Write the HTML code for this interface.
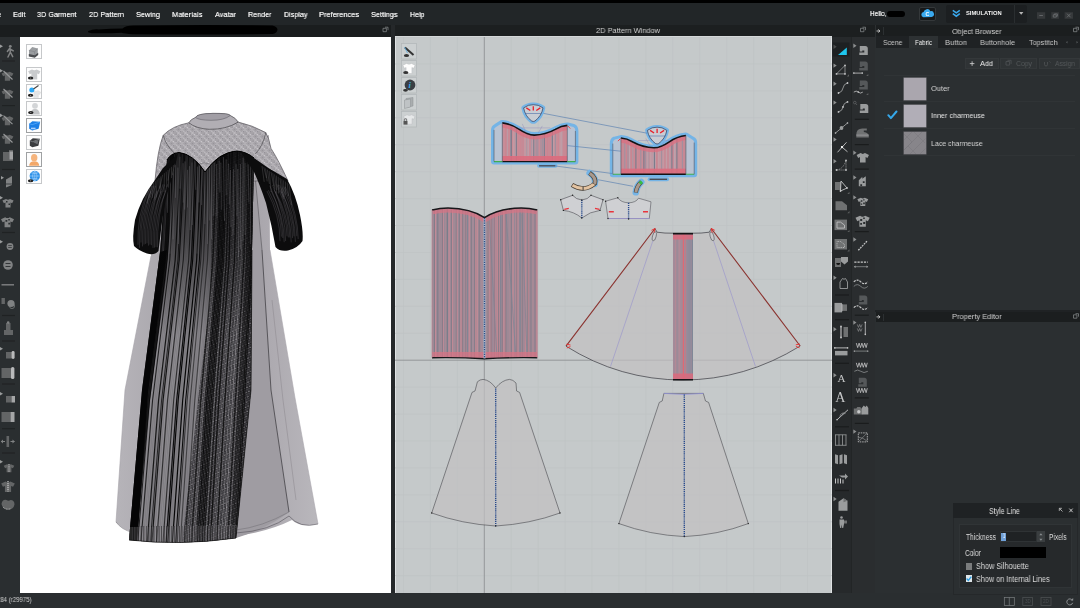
<!DOCTYPE html>
<html><head><meta charset="utf-8"><title>CLO</title>
<style>
*{box-sizing:border-box;margin:0;padding:0}
html,body{width:1080px;height:608px;overflow:hidden;background:#2a2e30}
body{position:relative;font-family:"Liberation Sans","DejaVu Sans",sans-serif;font-size:8px;color:#e8e8e8}
.abs{position:absolute}
.lb{will-change:transform;position:absolute;white-space:nowrap;transform-origin:0 50%;line-height:1.2;display:block}
#topblack{left:0;top:0;width:1080px;height:3px;background:#000}
#menubar{left:0;top:3px;width:1080px;height:22px;background:#222628}
#title3d{left:0;top:25px;width:391px;height:12px;background:#1a1d1e}
#title2d{left:394.5px;top:25px;width:481.5px;height:12px;background:#1c1f20}
#ltool{left:0;top:37px;width:20px;height:556px;background:#2a2e30}
#view3d{left:20px;top:37px;width:370.8px;height:555.5px;background:#fff;overflow:hidden}
#split{left:390.8px;top:25px;width:3.8px;height:568px;background:#25282a}
#view2d{left:394.5px;top:36px;width:437px;height:557.5px;border-right:1px solid #dfe2e3;background:#c5c9ca;overflow:hidden;border-left:1px solid #dfe2e3;border-bottom:1px solid #dfe2e3;border-top:1px solid #d4d7d8}
#rtoolA{left:831.5px;top:37px;width:19.5px;height:556px;background:#26292b}
#rtoolB{left:851px;top:37px;width:24px;height:556px;background:#2a2d2f;border-left:1px solid #222526}
#rpanel{left:875px;top:25px;width:205px;height:568px;background:#2b2f31}
#status{left:0;top:593px;width:1080px;height:15px;background:#2a2e30}
svg{position:absolute;left:0;top:0;overflow:visible}
</style></head><body>

<div id="topblack" class="abs"></div>
<div id="menubar" class="abs"></div>
<span class="lb" id="lb0" style="left:-3.0px;top:9.8px;font-size:8px;color:#e9e9e9;font-weight:normal;transform:scaleX(0.943);text-shadow:0 0 .6px #fff">e</span>
<span class="lb" id="lb1" style="left:12.5px;top:9.8px;font-size:8px;color:#e9e9e9;font-weight:normal;transform:scaleX(0.906);text-shadow:0 0 .6px #fff">Edit</span>
<span class="lb" id="lb2" style="left:37.0px;top:9.8px;font-size:8px;color:#e9e9e9;font-weight:normal;transform:scaleX(0.906);text-shadow:0 0 .6px #fff">3D Garment</span>
<span class="lb" id="lb3" style="left:88.5px;top:9.8px;font-size:8px;color:#e9e9e9;font-weight:normal;transform:scaleX(0.915);text-shadow:0 0 .6px #fff">2D Pattern</span>
<span class="lb" id="lb4" style="left:136.0px;top:9.8px;font-size:8px;color:#e9e9e9;font-weight:normal;transform:scaleX(0.914);text-shadow:0 0 .6px #fff">Sewing</span>
<span class="lb" id="lb5" style="left:172.0px;top:9.8px;font-size:8px;color:#e9e9e9;font-weight:normal;transform:scaleX(0.940);text-shadow:0 0 .6px #fff">Materials</span>
<span class="lb" id="lb6" style="left:214.5px;top:9.8px;font-size:8px;color:#e9e9e9;font-weight:normal;transform:scaleX(0.914);text-shadow:0 0 .6px #fff">Avatar</span>
<span class="lb" id="lb7" style="left:248.0px;top:9.8px;font-size:8px;color:#e9e9e9;font-weight:normal;transform:scaleX(0.895);text-shadow:0 0 .6px #fff">Render</span>
<span class="lb" id="lb8" style="left:283.5px;top:9.8px;font-size:8px;color:#e9e9e9;font-weight:normal;transform:scaleX(0.896);text-shadow:0 0 .6px #fff">Display</span>
<span class="lb" id="lb9" style="left:319.0px;top:9.8px;font-size:8px;color:#e9e9e9;font-weight:normal;transform:scaleX(0.927);text-shadow:0 0 .6px #fff">Preferences</span>
<span class="lb" id="lb10" style="left:371.0px;top:9.8px;font-size:8px;color:#e9e9e9;font-weight:normal;transform:scaleX(0.917);text-shadow:0 0 .6px #fff">Settings</span>
<span class="lb" id="lb11" style="left:409.5px;top:9.8px;font-size:8px;color:#e9e9e9;font-weight:normal;transform:scaleX(0.881);text-shadow:0 0 .6px #fff">Help</span>
<span class="lb" id="lb12" style="left:870.0px;top:9.4px;font-size:8px;color:#e9e9e9;font-weight:normal;transform:scaleX(0.807);text-shadow:0 0 .6px #fff">Hello,</span>
<div class="abs" style="left:887px;top:10.5px;width:18px;height:6.5px;background:#000;border-radius:3px"></div>
<div class="abs" style="left:918.5px;top:6.5px;width:17.5px;height:14px;background:#17191a;border:1px solid #34383a;border-radius:2px"></div>
<svg width="1080" height="608" viewBox="0 0 1080 608" style="pointer-events:none">
<path d="M923.3 17.2 a2.6 2.6 0 0 1 .3 -5.1 a3.6 3.6 0 0 1 6.8 -.9 a3 3 0 0 1 1.2 5.9 z" fill="#3aa9ee"/>
<text x="925.4" y="16.3" font-size="5.2" font-weight="bold" fill="#fff" font-family="Liberation Sans, sans-serif">C</text>
</svg>
<div class="abs" style="left:945.5px;top:4.5px;width:81.5px;height:18.5px;background:#1c1f21;border-radius:2px"></div>
<div class="abs" style="left:1013.5px;top:5px;width:1px;height:17.5px;background:#2a2e30"></div>
<svg width="1080" height="608" viewBox="0 0 1080 608"><path d="M952.8 10.3 l3.5 2.6 l3.5 -2.6 M952.8 13.6 l3.5 2.6 l3.5 -2.6" stroke="#3aa9ee" stroke-width="1.5" fill="none"/><path d="M1019 12 h4.4 l-2.2 2.8z" fill="#b5b5b5"/><rect x="1037" y="12.2" width="8.2" height="6.6" fill="#36393b"/><rect x="1051.3" y="12.2" width="7.6" height="6.6" fill="#36393b"/><rect x="1064.6" y="12.2" width="8.4" height="6.6" fill="#36393b"/><path d="M1039.3 15.5h3.6 M1053.3 14.8h3v2.3h-3z M1054.4 14.8v-.9h3v2.3h-1 M1067 13.7l3.6 3.6 M1070.6 13.7l-3.6 3.6" stroke="#6d7173" stroke-width=".8" fill="none"/></svg>
<span class="lb" id="lb13" style="left:966.0px;top:10.3px;font-size:5.8px;color:#f2f2f2;font-weight:bold;transform:scaleX(0.999);">SIMULATION</span>
<div id="title3d" class="abs"></div>
<div id="title2d" class="abs"></div>
<div id="split" class="abs"></div>
<span class="lb" id="lb14" style="left:595.8px;top:26.1px;font-size:7.8px;color:#d0d0d0;font-weight:normal;transform:scaleX(0.953);">2D Pattern Window</span>
<svg width="1080" height="608" viewBox="0 0 1080 608"><path d="M88.5 31 q4 -2 10 -1.6 q12 -.6 24 -.8 q3 -3.4 12 -3.2 q70 -.6 138 0 q5 1.2 5 4.4 q-.4 3.6 -5 4.2 q-70 1 -140 .2 q-8 -.4 -11 -1.4 q-14 .8 -30 .4 q-5 -.6 -3 -2.2z" fill="#000"/><path d="M383 28.3h3.4v3.4h-3.4z M385 27.2h3v3 M860.5 28.3h3.4v3.4h-3.4z M862.5 27.2h3v3" stroke="#8b8f91" stroke-width=".7" fill="none"/></svg>
<div id="ltool" class="abs"></div>
<svg width="1080" height="608" viewBox="0 0 1080 608">
<path d="M2 61H15" stroke="#1f2223" stroke-width="1.1"/>
<path d="M2 105.6H15" stroke="#1f2223" stroke-width="1.1"/>
<path d="M2 169.5H15" stroke="#1f2223" stroke-width="1.1"/>
<path d="M2 232.5H15" stroke="#1f2223" stroke-width="1.1"/>
<path d="M2 315.5H15" stroke="#1f2223" stroke-width="1.1"/>
<path d="M2 341H15" stroke="#1f2223" stroke-width="1.1"/>
<path d="M2 384H15" stroke="#1f2223" stroke-width="1.1"/>
<path d="M2 428.7H15" stroke="#1f2223" stroke-width="1.1"/>
<path d="M2 453H15" stroke="#1f2223" stroke-width="1.1"/>
<path d="M0 44.5l3 1.8l-3 1.8z" fill="#9a9c9d"/>
<circle cx="10.3" cy="46.3" r="1.4" fill="#808283"/><path d="M10 48 l-2.6 3.5 M10 48 l.3 4 l-2.3 5 M10.3 52 l2.4 4.6 M10 49 l3.3 1.8" stroke="#808283" stroke-width="1.5" fill="none" stroke-linecap="round"/>
<path d="M0 69l3 1.8l-3 1.8z" fill="#9a9c9d"/>
<path transform="translate(7.5 76) scale(0.95)" d="M-2.2 -4.5 q2.2 1.6 4.4 0 l4 1.8 l-1.6 3 l-1.8 -.8 v5.5 h-5.6 v-5.5 l-1.8 .8 l-1.6 -3z" fill="#636566"/>
<path d="M3.5 71 l9 8.5" stroke="#97999a" stroke-width="1.1"/>
<path transform="translate(7.5 94) scale(0.95)" d="M-2.2 -4.5 q2.2 1.6 4.4 0 l4 1.8 l-1.6 3 l-1.8 -.8 v5.5 h-5.6 v-5.5 l-1.8 .8 l-1.6 -3z" fill="#636566"/>
<path d="M3.5 89 l9 8.5" stroke="#97999a" stroke-width="1.1"/>
<path d="M0 113.6l3 1.8l-3 1.8z" fill="#9a9c9d"/>
<path transform="translate(7.5 120.6) scale(0.95)" d="M-2.2 -4.5 q2.2 1.6 4.4 0 l4 1.8 l-1.6 3 l-1.8 -.8 v5.5 h-5.6 v-5.5 l-1.8 .8 l-1.6 -3z" fill="#636566"/>
<path d="M3.5 115.6 l9 8.5" stroke="#97999a" stroke-width="1.1"/>
<path transform="translate(7.5 139) scale(0.95)" d="M-2.2 -4.5 q2.2 1.6 4.4 0 l4 1.8 l-1.6 3 l-1.8 -.8 v5.5 h-5.6 v-5.5 l-1.8 .8 l-1.6 -3z" fill="#636566"/>
<path d="M3.5 134 l9 8.5" stroke="#97999a" stroke-width="1.1"/>
<path d="M3 152 h6 v-2 h4 v11 h-10z" fill="#636566"/><path d="M9.5 151.5 h3.5 v8 h-3.5z" fill="#a2a3a4"/>
<path d="M1 176l3 1.8l-3 1.8z" fill="#9a9c9d"/>
<path d="M6 179.5 l6 -3.5 v9 l-6 2.5z" fill="#808283"/><path d="M6 184 h6" stroke="#2a2e30" stroke-width=".8"/>
<path d="M0 196l3 1.8l-3 1.8z" fill="#9a9c9d"/>
<path transform="translate(8 203) scale(0.9)" d="M-2.2 -4.5 q2.2 1.6 4.4 0 l4 1.8 l-1.6 3 l-1.8 -.8 v5.5 h-5.6 v-5.5 l-1.8 .8 l-1.6 -3z" fill="#808283"/>
<path transform="translate(7.5 222) scale(1.05)" d="M-2.2 -4.5 q2.2 1.6 4.4 0 l4 1.8 l-1.6 3 l-1.8 -.8 v5.5 h-5.6 v-5.5 l-1.8 .8 l-1.6 -3z" fill="#808283"/>
<path d="M6 201h1.5v1.5H6z M8.5 203.5h1.5v1.5H8.5z M5.5 220h1.8v1.8H5.5z M8.3 222.8h1.8v1.8H8.3z M8.3 219h1.5v1.5H8.3z" fill="#2a2e30"/>
<path d="M0 240l3 1.8l-3 1.8z" fill="#9a9c9d"/>
<circle cx="10" cy="246.5" r="3.4" fill="#808283"/><path d="M8.2 245.5h3.6 M8.2 247.5h3.6" stroke="#2a2e30" stroke-width=".7"/>
<circle cx="8" cy="265" r="4.8" fill="#808283"/><path d="M5.5 263.5h5 M5.5 266.5h5" stroke="#2a2e30" stroke-width=".9"/>
<path d="M1.5 284.8h12.5" stroke="#808283" stroke-width="1.4"/>
<rect x="1.5" y="298" width="3.4" height="6" fill="#636566"/><circle cx="11" cy="303.5" r="3.6" fill="#808283"/><circle cx="12" cy="306" r="2.6" fill="none" stroke="#808283" stroke-width=".7"/>
<path d="M6 323 h4.5 v8 h-4.5z" fill="#636566"/><circle cx="8.2" cy="322.6" r="1.3" fill="#808283"/>
<rect x="4" y="330" width="9" height="5" fill="#636566"/>
<path d="M0 347l3 1.8l-3 1.8z" fill="#9a9c9d"/>
<rect x="6" y="352" width="6" height="6.5" fill="#636566"/><rect x="11.6" y="351" width="3" height="8" rx="1.4" fill="#b9babb"/>
<rect x="1.5" y="368" width="10" height="10" fill="#636566"/><rect x="11" y="367" width="3.4" height="12" rx="1.6" fill="#b9babb"/>
<path d="M0 392l3 1.8l-3 1.8z" fill="#9a9c9d"/>
<rect x="6" y="396" width="5.5" height="6.5" fill="#636566"/><rect x="11.5" y="396" width="3.5" height="6.5" fill="#a5a6a7"/>
<rect x="1.5" y="412" width="9" height="10" fill="#636566"/><rect x="10.5" y="412" width="4" height="10" fill="#a5a6a7"/>
<rect x="6.5" y="436" width="2.6" height="11" fill="#636566"/><path d="M1 441.5h4 M10.5 441.5h4" stroke="#808283" stroke-width="1.2"/><path d="M3 439.5l-2.2 2l2.2 2z M12.5 439.5l2.2 2l-2.2 2z" fill="#808283"/>
<path d="M0 460l3 1.8l-3 1.8z" fill="#9a9c9d"/>
<path transform="translate(9 468) scale(0.85)" d="M-2.2 -4.5 q2.2 1.6 4.4 0 l4 1.8 l-1.6 3 l-1.8 -.8 v5.5 h-5.6 v-5.5 l-1.8 .8 l-1.6 -3z" fill="#636566"/>
<path d="M9 464v8" stroke="#c0c1c2" stroke-width="1.1" stroke-dasharray="1 .8"/>
<path transform="translate(8 486.5) scale(1.1)" d="M-2.2 -4.5 q2.2 1.6 4.4 0 l4 1.8 l-1.6 3 l-1.8 -.8 v5.5 h-5.6 v-5.5 l-1.8 .8 l-1.6 -3z" fill="#636566"/>
<path d="M8 481v10.5" stroke="#c0c1c2" stroke-width="1.3" stroke-dasharray="1.2 .8"/>
<path d="M1.5 504 q1 -5 5 -4 q2 1.3 4 0 q4 0 4 4.5 q-1 5 -6 5 q-6 0 -7 -5.5z" fill="#636566"/><path d="M3 507 q3.5 3.5 8 1.5" stroke="#b4b5b6" stroke-width="1" fill="none" stroke-dasharray="1 .7"/>
</svg>
<div id="view3d" class="abs"></div>
<svg width="1080" height="608" viewBox="0 0 1080 608">
<defs>
<pattern id="lace" width="7" height="7" patternUnits="userSpaceOnUse"><rect width="7" height="7" fill="#a7a4a9"/><path d="M0 3.5L3.5 0L7 3.5L3.5 7Z" fill="none" stroke="#c6c4c9" stroke-width=".8"/><circle cx="1.2" cy="1.2" r=".6" fill="#8c8990"/><circle cx="5.6" cy="1.4" r=".5" fill="#d2d0d5"/><circle cx="5.4" cy="5.6" r=".6" fill="#8f8c93"/><circle cx="1.6" cy="5.6" r=".5" fill="#bdbbc0"/><circle cx="3.5" cy="3.5" r=".7" fill="#98959b"/></pattern>
<pattern id="hatch" width="3.2" height="4.4" patternUnits="userSpaceOnUse" patternTransform="rotate(-24)"><rect width="3.2" height="4.4" fill="#262528"/><path d="M0 1.1H3.2" stroke="#949297" stroke-width=".8" stroke-dasharray="2 1.2"/><path d="M0 3.3H3.2" stroke="#5a585d" stroke-width=".6"/></pattern>
<linearGradient id="topdark" x1="0" y1="0" x2="0" y2="1"><stop offset="0" stop-color="#060607" stop-opacity=".85"/><stop offset=".5" stop-color="#060607" stop-opacity=".5"/><stop offset="1" stop-color="#060607" stop-opacity="0"/></linearGradient>
<linearGradient id="sheerL" x1="0" y1="0" x2="1" y2="0"><stop offset="0" stop-color="#b6b4b9"/><stop offset=".5" stop-color="#a7a4aa"/><stop offset="1" stop-color="#9f9ca2"/></linearGradient>
<linearGradient id="sheerR" x1="0" y1="0" x2="1" y2="0"><stop offset="0" stop-color="#a29fa5"/><stop offset=".4" stop-color="#adaab0"/><stop offset="1" stop-color="#b9b7bc"/></linearGradient>
<clipPath id="innerclip"><path d="M167 160 Q171 153 179 152.5 Q193 154 205 172 Q219 152 237 151 Q247 152 254 158 L252 250 L251 390 L236 538 Q180 546 129 540 L142 390 L160 252 Z"/></clipPath>
<clipPath id="slclip"><path d="M178 153.5 L163 168 L155 180 Q141 198 135 220 Q132 238 134 246 Q139 251 147 253.5 Q154 256 158.5 251 Q160 238 162 222 Q165 198 172 178 Z"/><path d="M240 151 L254 158 L268.4 168 L287 179 Q296 195 300 215 Q303.5 232 302.5 241 Q298 248 288 250.5 Q280 252 275.5 247 Q272 226 266 203 Q260 185 254 172 Z"/></clipPath>
</defs>
<path d="M163 135 L151 256 L125 390 L116 522 Q122 529 130 531 L240 534 L238 250 Z" fill="url(#sheerL)"/>
<path d="M238 150 L269 135 L270 250 L295 398 L318 524 Q300 528 292 520 Q270 531 238 536 Z" fill="url(#sheerR)"/>
<path d="M252 160 L262 250 L271 390 L289 512 Q270 527 236 538 L251 390 Z" fill="#9f9ca2"/>
<path d="M262 250 L271 390 L289 512" stroke="#37353a" stroke-width=".7" fill="none"/>
<path d="M254 165 L262 250" stroke="#545257" stroke-width=".6" fill="none"/>
<path d="M272 300 L283 400 L296 500" stroke="#8a878d" stroke-width=".5" fill="none"/>
<path d="M116 522 Q122 530 132 532" stroke="#6d6a70" stroke-width=".6" fill="none"/>
<path d="M236 533 Q270 531 289 516 Q300 529 318 524" stroke="#55535a" stroke-width=".6" fill="none"/>
<path d="M236 530 Q262 527 289 512" stroke="#6f6d73" stroke-width=".5" fill="none"/>
<path d="M116 522 L125 390 L151 256" stroke="#a4a1a7" stroke-width=".6" fill="none"/>
<path d="M318 524 L295 398 L270 250" stroke="#a9a6ac" stroke-width=".6" fill="none"/>
<path d="M188.8 122.8 Q172 126 163.2 135.3 Q157.5 150 155 181 L288 181 Q279 161 271 148.4 Q269 138 265.8 132.6 Q252 125 238.2 122.1 Q214 132 188.8 122.8 Z" fill="url(#lace)" stroke="#5a585d" stroke-width=".7"/>
<path d="M163.2 135.3 Q166 146 175.5 154 M265.8 132.6 Q263 146 255.3 154" stroke="#4f4d52" stroke-width=".7" fill="none"/>
<path d="M196 166 Q204 160 214 166" stroke="#6a686d" stroke-width=".5" fill="none"/>
<path d="M195.4 117.5 Q197 113.6 213 113.4 Q229 113.2 230.3 115.5 Q236 118 238.2 122.1 Q226 129.6 209.2 129.3 Q196 128.6 188.8 122.8 Q191 119 195.4 117.5Z" fill="#b1aeb4" stroke="#4b494d" stroke-width=".7"/>
<path d="M195.4 117.5 Q197 113.6 213 113.4 Q229 113.2 230.3 115.5 Q224 120.4 211 120.3 Q199 120.2 195.4 117.5Z" fill="#a19ea5" stroke="#55535a" stroke-width=".5"/>
<g clip-path="url(#innerclip)">
<rect x="120" y="145" width="150" height="400" fill="#232225"/>
<path d="M214 150 L256 150 L254 240 L252 390 L236 545 L178 545 L196 400 L208 300 Z" fill="url(#hatch)"/>
<path d="M176 150 L214 150 L210 300 L198 400 L182 545 L136 545 L150 400 L166 280 Z" fill="#7b797e"/>
<path d="M166.0 150 L159.0 260 L140.5 400 L128.0 545" stroke="#111" stroke-width="0.8" fill="none" opacity="0.95"/>
<path d="M167.3 150 L160.3 260 L142.0 400 L129.6 545" stroke="#111" stroke-width="1.2" fill="none" opacity="0.95"/>
<path d="M168.6 150 L161.7 260 L143.5 400 L131.2 545" stroke="#8d8b90" stroke-width="0.8" fill="none" opacity="0.4"/>
<path d="M169.8 150 L163.0 260 L145.0 400 L132.7 545" stroke="#9a989d" stroke-width="0.6" fill="none" opacity="0.7"/>
<path d="M171.1 150 L164.4 260 L146.5 400 L134.3 545" stroke="#111" stroke-width="1.2" fill="none" opacity="0.95"/>
<path d="M172.4 150 L165.7 260 L148.0 400 L135.9 545" stroke="#111" stroke-width="1.2" fill="none" opacity="0.95"/>
<path d="M173.7 150 L167.1 260 L149.5 400 L137.5 545" stroke="#000" stroke-width="0.8" fill="none" opacity="0.95"/>
<path d="M174.9 150 L168.4 260 L151.1 400 L139.1 545" stroke="#b1afb4" stroke-width="0.6" fill="none" opacity="0.7"/>
<path d="M176.2 150 L169.8 260 L152.6 400 L140.6 545" stroke="#000" stroke-width="0.8" fill="none" opacity="0.95"/>
<path d="M177.5 150 L171.1 260 L154.1 400 L142.2 545" stroke="#b1afb4" stroke-width="0.5" fill="none" opacity="0.55"/>
<path d="M178.8 150 L172.5 260 L155.6 400 L143.8 545" stroke="#9a989d" stroke-width="0.6" fill="none" opacity="0.7"/>
<path d="M180.0 150 L173.8 260 L157.1 400 L145.4 545" stroke="#9a989d" stroke-width="0.8" fill="none" opacity="0.55"/>
<path d="M181.3 150 L175.2 260 L158.6 400 L147.0 545" stroke="#111" stroke-width="1.2" fill="none" opacity="0.95"/>
<path d="M182.6 150 L176.5 260 L160.1 400 L148.5 545" stroke="#8d8b90" stroke-width="0.6" fill="none" opacity="0.4"/>
<path d="M183.9 150 L177.9 260 L161.6 400 L150.1 545" stroke="#0a0a0b" stroke-width="0.8" fill="none" opacity="0.95"/>
<path d="M185.1 150 L179.2 260 L163.1 400 L151.7 545" stroke="#111" stroke-width="1.2" fill="none" opacity="0.95"/>
<path d="M186.4 150 L180.6 260 L164.6 400 L153.3 545" stroke="#9a989d" stroke-width="0.6" fill="none" opacity="0.7"/>
<path d="M187.7 150 L181.9 260 L166.1 400 L154.9 545" stroke="#b1afb4" stroke-width="0.6" fill="none" opacity="0.7"/>
<path d="M189.0 150 L183.3 260 L167.6 400 L156.4 545" stroke="#111" stroke-width="0.8" fill="none" opacity="0.95"/>
<path d="M190.2 150 L184.6 260 L169.1 400 L158.0 545" stroke="#b1afb4" stroke-width="0.5" fill="none" opacity="0.55"/>
<path d="M191.5 150 L186.0 260 L170.6 400 L159.6 545" stroke="#b1afb4" stroke-width="0.8" fill="none" opacity="0.4"/>
<path d="M192.8 150 L187.3 260 L172.2 400 L161.2 545" stroke="#9a989d" stroke-width="0.8" fill="none" opacity="0.7"/>
<path d="M194.1 150 L188.7 260 L173.7 400 L162.8 545" stroke="#111" stroke-width="0.8" fill="none" opacity="0.95"/>
<path d="M195.3 150 L190.0 260 L175.2 400 L164.3 545" stroke="#b1afb4" stroke-width="0.6" fill="none" opacity="0.55"/>
<path d="M196.6 150 L191.3 260 L176.7 400 L165.9 545" stroke="#0a0a0b" stroke-width="1.2" fill="none" opacity="0.95"/>
<path d="M197.9 150 L192.7 260 L178.2 400 L167.5 545" stroke="#000" stroke-width="1.2" fill="none" opacity="0.95"/>
<path d="M199.2 150 L194.0 260 L179.7 400 L169.1 545" stroke="#8d8b90" stroke-width="0.6" fill="none" opacity="0.55"/>
<path d="M200.4 150 L195.4 260 L181.2 400 L170.7 545" stroke="#8d8b90" stroke-width="0.5" fill="none" opacity="0.7"/>
<path d="M201.7 150 L196.7 260 L182.7 400 L172.2 545" stroke="#000" stroke-width="1.2" fill="none" opacity="0.95"/>
<path d="M203.0 150 L198.1 260 L184.2 400 L173.8 545" stroke="#9a989d" stroke-width="0.8" fill="none" opacity="0.55"/>
<path d="M204.3 150 L199.4 260 L185.7 400 L175.4 545" stroke="#000" stroke-width="1.0" fill="none" opacity="0.95"/>
<path d="M205.5 150 L200.8 260 L187.2 400 L177.0 545" stroke="#000" stroke-width="0.6" fill="none" opacity="0.95"/>
<path d="M206.8 150 L202.1 260 L188.7 400 L178.6 545" stroke="#9a989d" stroke-width="0.6" fill="none" opacity="0.7"/>
<path d="M208.1 150 L203.5 260 L190.2 400 L180.1 545" stroke="#111" stroke-width="0.6" fill="none" opacity="0.95"/>
<path d="M209.4 150 L204.8 260 L191.7 400 L181.7 545" stroke="#9a989d" stroke-width="0.6" fill="none" opacity="0.55"/>
<path d="M210.6 150 L206.2 260 L193.3 400 L183.3 545" stroke="#9a989d" stroke-width="0.6" fill="none" opacity="0.55"/>
<path d="M211.9 150 L207.5 260 L194.8 400 L184.9 545" stroke="#111" stroke-width="0.6" fill="none" opacity="0.95"/>
<path d="M213.2 150 L208.9 260 L196.3 400 L186.4 545" stroke="#b1afb4" stroke-width="0.6" fill="none" opacity="0.55"/>
<path d="M214.5 150 L210.2 260 L197.8 400 L188.0 545" stroke="#9a989d" stroke-width="0.6" fill="none" opacity="0.55"/>
<path d="M215.7 150 L211.6 260 L199.3 400 L189.6 545" stroke="#8d8b90" stroke-width="0.6" fill="none" opacity="0.7"/>
<path d="M217.0 150 L212.9 260 L200.8 400 L191.2 545" stroke="#111" stroke-width="0.8" fill="none" opacity="0.95"/>
<path d="M218.3 150 L214.3 260 L202.3 400 L192.8 545" stroke="#9a989d" stroke-width="0.6" fill="none" opacity="0.7"/>
<path d="M219.6 150 L215.6 260 L203.8 400 L194.3 545" stroke="#9a989d" stroke-width="0.8" fill="none" opacity="0.55"/>
<path d="M220.8 150 L217.0 260 L205.3 400 L195.9 545" stroke="#111" stroke-width="0.6" fill="none" opacity="0.95"/>
<path d="M222.1 150 L218.3 260 L206.8 400 L197.5 545" stroke="#0a0a0b" stroke-width="1.0" fill="none" opacity="0.95"/>
<path d="M223.4 150 L219.7 260 L208.3 400 L199.1 545" stroke="#0a0a0b" stroke-width="0.8" fill="none" opacity="0.95"/>
<path d="M224.7 150 L221.0 260 L209.8 400 L200.7 545" stroke="#111" stroke-width="1.0" fill="none" opacity="0.95"/>
<path d="M225.9 150 L222.3 260 L211.3 400 L202.2 545" stroke="#000" stroke-width="0.8" fill="none" opacity="0.95"/>
<path d="M227.2 150 L223.7 260 L212.8 400 L203.8 545" stroke="#0a0a0b" stroke-width="0.8" fill="none" opacity="0.95"/>
<path d="M228.5 150 L225.0 260 L214.4 400 L205.4 545" stroke="#b1afb4" stroke-width="0.8" fill="none" opacity="0.4"/>
<path d="M229.8 150 L226.4 260 L215.9 400 L207.0 545" stroke="#0a0a0b" stroke-width="0.8" fill="none" opacity="0.95"/>
<path d="M231.0 150 L227.7 260 L217.4 400 L208.6 545" stroke="#8d8b90" stroke-width="0.5" fill="none" opacity="0.55"/>
<path d="M232.3 150 L229.1 260 L218.9 400 L210.1 545" stroke="#111" stroke-width="1.2" fill="none" opacity="0.95"/>
<path d="M233.6 150 L230.4 260 L220.4 400 L211.7 545" stroke="#8d8b90" stroke-width="0.8" fill="none" opacity="0.4"/>
<path d="M234.9 150 L231.8 260 L221.9 400 L213.3 545" stroke="#b1afb4" stroke-width="0.5" fill="none" opacity="0.55"/>
<path d="M236.1 150 L233.1 260 L223.4 400 L214.9 545" stroke="#8d8b90" stroke-width="0.8" fill="none" opacity="0.55"/>
<path d="M237.4 150 L234.5 260 L224.9 400 L216.5 545" stroke="#111" stroke-width="1.0" fill="none" opacity="0.95"/>
<path d="M238.7 150 L235.8 260 L226.4 400 L218.0 545" stroke="#9a989d" stroke-width="0.6" fill="none" opacity="0.7"/>
<path d="M240.0 150 L237.2 260 L227.9 400 L219.6 545" stroke="#8d8b90" stroke-width="0.5" fill="none" opacity="0.4"/>
<path d="M241.2 150 L238.5 260 L229.4 400 L221.2 545" stroke="#b1afb4" stroke-width="0.8" fill="none" opacity="0.55"/>
<path d="M242.5 150 L239.9 260 L230.9 400 L222.8 545" stroke="#b1afb4" stroke-width="0.5" fill="none" opacity="0.4"/>
<path d="M243.8 150 L241.2 260 L232.4 400 L224.4 545" stroke="#b1afb4" stroke-width="0.8" fill="none" opacity="0.7"/>
<path d="M245.1 150 L242.6 260 L233.9 400 L225.9 545" stroke="#8d8b90" stroke-width="0.5" fill="none" opacity="0.7"/>
<path d="M246.3 150 L243.9 260 L235.5 400 L227.5 545" stroke="#000" stroke-width="0.6" fill="none" opacity="0.95"/>
<path d="M247.6 150 L245.3 260 L237.0 400 L229.1 545" stroke="#b1afb4" stroke-width="0.5" fill="none" opacity="0.55"/>
<path d="M248.9 150 L246.6 260 L238.5 400 L230.7 545" stroke="#111" stroke-width="0.6" fill="none" opacity="0.95"/>
<path d="M250.2 150 L248.0 260 L240.0 400 L232.3 545" stroke="#111" stroke-width="0.6" fill="none" opacity="0.95"/>
<path d="M251.4 150 L249.3 260 L241.5 400 L233.8 545" stroke="#111" stroke-width="0.6" fill="none" opacity="0.95"/>
<path d="M252.7 150 L250.7 260 L243.0 400 L235.4 545" stroke="#111" stroke-width="1.2" fill="none" opacity="0.95"/>
<path d="M254.0 150 L252.0 260 L244.5 400 L237.0 545" stroke="#000" stroke-width="0.8" fill="none" opacity="0.95"/>
<path d="M160 252 L167 250 L148 392 L137 545 L128 545 L142 390 Z" fill="#050506"/>
<rect x="120" y="145" width="150" height="190" fill="url(#topdark)"/>
<path d="M168.1 168.4 l-0.8 44.4" stroke="#a3a1a6" stroke-width=".5" opacity=".5"/>
<path d="M170.7 168.5 l-0.7 85.2" stroke="#a3a1a6" stroke-width=".5" opacity=".5"/>
<path d="M173.3 164.0 l-0.2 75.4" stroke="#a3a1a6" stroke-width=".5" opacity=".5"/>
<path d="M175.4 164.7 l0.0 33.1" stroke="#a3a1a6" stroke-width=".5" opacity=".5"/>
<path d="M177.9 167.5 l0.7 76.5" stroke="#a3a1a6" stroke-width=".5" opacity=".5"/>
<path d="M180.0 156.7 l-0.0 32.0" stroke="#a3a1a6" stroke-width=".5" opacity=".5"/>
<path d="M183.1 163.2 l-0.0 39.4" stroke="#a3a1a6" stroke-width=".5" opacity=".5"/>
<path d="M184.9 161.4 l-0.2 48.2" stroke="#a3a1a6" stroke-width=".5" opacity=".5"/>
<path d="M187.5 169.8 l-0.1 37.7" stroke="#a3a1a6" stroke-width=".5" opacity=".5"/>
<path d="M189.6 166.1 l0.6 64.0" stroke="#a3a1a6" stroke-width=".5" opacity=".5"/>
<path d="M192.0 162.5 l0.3 62.5" stroke="#a3a1a6" stroke-width=".5" opacity=".5"/>
<path d="M195.0 156.6 l0.8 33.2" stroke="#a3a1a6" stroke-width=".5" opacity=".5"/>
<path d="M197.4 166.6 l-0.4 87.0" stroke="#a3a1a6" stroke-width=".5" opacity=".5"/>
<path d="M199.6 156.3 l-0.6 46.2" stroke="#a3a1a6" stroke-width=".5" opacity=".5"/>
<path d="M202.2 167.2 l-0.6 37.8" stroke="#a3a1a6" stroke-width=".5" opacity=".5"/>
<path d="M204.0 160.6 l0.9 63.5" stroke="#a3a1a6" stroke-width=".5" opacity=".5"/>
<path d="M207.3 157.7 l0.4 86.3" stroke="#a3a1a6" stroke-width=".5" opacity=".5"/>
<path d="M209.5 167.9 l0.1 52.6" stroke="#a3a1a6" stroke-width=".5" opacity=".5"/>
<path d="M211.3 160.5 l0.1 78.7" stroke="#a3a1a6" stroke-width=".5" opacity=".5"/>
<path d="M214.3 162.6 l-0.5 53.3" stroke="#a3a1a6" stroke-width=".5" opacity=".5"/>
<path d="M216.5 163.9 l0.3 52.5" stroke="#a3a1a6" stroke-width=".5" opacity=".5"/>
<path d="M219.2 160.8 l0.7 31.5" stroke="#a3a1a6" stroke-width=".5" opacity=".5"/>
<path d="M220.9 162.7 l0.4 47.1" stroke="#a3a1a6" stroke-width=".5" opacity=".5"/>
<path d="M223.5 157.2 l1.0 63.8" stroke="#a3a1a6" stroke-width=".5" opacity=".5"/>
<path d="M226.1 159.3 l0.1 36.0" stroke="#a3a1a6" stroke-width=".5" opacity=".5"/>
<path d="M228.6 163.7 l0.7 40.8" stroke="#a3a1a6" stroke-width=".5" opacity=".5"/>
<path d="M230.5 170.0 l0.3 57.2" stroke="#a3a1a6" stroke-width=".5" opacity=".5"/>
<path d="M233.5 169.2 l-0.5 66.0" stroke="#a3a1a6" stroke-width=".5" opacity=".5"/>
<path d="M236.1 163.8 l0.9 52.5" stroke="#a3a1a6" stroke-width=".5" opacity=".5"/>
<path d="M237.8 169.0 l0.7 88.0" stroke="#a3a1a6" stroke-width=".5" opacity=".5"/>
<path d="M240.4 164.0 l0.2 85.4" stroke="#a3a1a6" stroke-width=".5" opacity=".5"/>
<path d="M243.1 158.2 l-0.2 83.3" stroke="#a3a1a6" stroke-width=".5" opacity=".5"/>
<path d="M245.0 163.0 l-0.0 71.9" stroke="#a3a1a6" stroke-width=".5" opacity=".5"/>
<path d="M248.2 164.2 l0.7 38.2" stroke="#a3a1a6" stroke-width=".5" opacity=".5"/>
<path d="M250.4 158.1 l0.0 86.1" stroke="#a3a1a6" stroke-width=".5" opacity=".5"/>
<path d="M252.9 163.5 l0.6 70.3" stroke="#a3a1a6" stroke-width=".5" opacity=".5"/>
<path d="M128 527 L240 525 L238 545 L128 545 Z" fill="#8a888d" opacity=".35"/>
<path d="M131.0 526 v16" stroke="#000" stroke-width=".6" opacity=".8"/>
<path d="M133.6 526 v16" stroke="#000" stroke-width=".6" opacity=".8"/>
<path d="M136.1 526 v16" stroke="#000" stroke-width=".6" opacity=".8"/>
<path d="M138.7 526 v16" stroke="#000" stroke-width=".6" opacity=".8"/>
<path d="M141.2 526 v16" stroke="#000" stroke-width=".6" opacity=".8"/>
<path d="M143.8 526 v16" stroke="#000" stroke-width=".6" opacity=".8"/>
<path d="M146.3 526 v16" stroke="#000" stroke-width=".6" opacity=".8"/>
<path d="M148.8 526 v16" stroke="#000" stroke-width=".6" opacity=".8"/>
<path d="M151.4 526 v16" stroke="#000" stroke-width=".6" opacity=".8"/>
<path d="M153.9 526 v16" stroke="#000" stroke-width=".6" opacity=".8"/>
<path d="M156.5 526 v16" stroke="#000" stroke-width=".6" opacity=".8"/>
<path d="M159.1 526 v16" stroke="#000" stroke-width=".6" opacity=".8"/>
<path d="M161.6 526 v16" stroke="#000" stroke-width=".6" opacity=".8"/>
<path d="M164.2 526 v16" stroke="#000" stroke-width=".6" opacity=".8"/>
<path d="M166.7 526 v16" stroke="#000" stroke-width=".6" opacity=".8"/>
<path d="M169.2 526 v16" stroke="#000" stroke-width=".6" opacity=".8"/>
<path d="M171.8 526 v16" stroke="#000" stroke-width=".6" opacity=".8"/>
<path d="M174.3 526 v16" stroke="#000" stroke-width=".6" opacity=".8"/>
<path d="M176.9 526 v16" stroke="#000" stroke-width=".6" opacity=".8"/>
<path d="M179.4 526 v16" stroke="#000" stroke-width=".6" opacity=".8"/>
<path d="M182.0 526 v16" stroke="#000" stroke-width=".6" opacity=".8"/>
<path d="M184.6 526 v16" stroke="#000" stroke-width=".6" opacity=".8"/>
<path d="M187.1 526 v16" stroke="#000" stroke-width=".6" opacity=".8"/>
<path d="M189.7 526 v16" stroke="#000" stroke-width=".6" opacity=".8"/>
<path d="M192.2 526 v16" stroke="#000" stroke-width=".6" opacity=".8"/>
<path d="M194.8 526 v16" stroke="#000" stroke-width=".6" opacity=".8"/>
<path d="M197.3 526 v16" stroke="#000" stroke-width=".6" opacity=".8"/>
<path d="M199.8 526 v16" stroke="#000" stroke-width=".6" opacity=".8"/>
<path d="M202.4 526 v16" stroke="#000" stroke-width=".6" opacity=".8"/>
<path d="M204.9 526 v16" stroke="#000" stroke-width=".6" opacity=".8"/>
<path d="M207.5 526 v16" stroke="#000" stroke-width=".6" opacity=".8"/>
<path d="M210.1 526 v16" stroke="#000" stroke-width=".6" opacity=".8"/>
<path d="M212.6 526 v16" stroke="#000" stroke-width=".6" opacity=".8"/>
<path d="M215.1 526 v16" stroke="#000" stroke-width=".6" opacity=".8"/>
<path d="M217.7 526 v16" stroke="#000" stroke-width=".6" opacity=".8"/>
<path d="M220.2 526 v16" stroke="#000" stroke-width=".6" opacity=".8"/>
<path d="M222.8 526 v16" stroke="#000" stroke-width=".6" opacity=".8"/>
<path d="M225.3 526 v16" stroke="#000" stroke-width=".6" opacity=".8"/>
<path d="M227.9 526 v16" stroke="#000" stroke-width=".6" opacity=".8"/>
<path d="M230.4 526 v16" stroke="#000" stroke-width=".6" opacity=".8"/>
<path d="M233.0 526 v16" stroke="#000" stroke-width=".6" opacity=".8"/>
<path d="M235.6 526 v16" stroke="#000" stroke-width=".6" opacity=".8"/>
</g>
<path d="M167 160 Q171 153 179 152.5 Q193 154 205 172 Q219 152 237 151 Q247 152 254 158" stroke="#000" stroke-width="1" fill="none"/>
<path d="M129 540 Q180 546 236 538" stroke="#111" stroke-width=".7" fill="none"/>
<path d="M252 250 L251 390 L236 538" stroke="#111" stroke-width=".7" fill="none"/>
<path d="M178 153.5 L163 168 L155 180 Q141 198 135 220 Q132 238 134 246 Q139 251 147 253.5 Q154 256 158.5 251 Q160 238 162 222 Q165 198 172 178 Z" fill="#0c0c0d"/>
<path d="M240 151 L254 158 L268.4 168 L287 179 Q296 195 300 215 Q303.5 232 302.5 241 Q298 248 288 250.5 Q280 252 275.5 247 Q272 226 266 203 Q260 185 254 172 Z" fill="#0c0c0d"/>
<path d="M148.0 190.8 Q137.0 215 138.0 244.8" stroke="#7f7d82" stroke-width=".45" fill="none" opacity=".6"/>
<path d="M149.5 188.7 Q138.5 215 139.5 247.9" stroke="#7f7d82" stroke-width=".45" fill="none" opacity=".6"/>
<path d="M151.0 191.1 Q140.0 215 141.0 242.5" stroke="#7f7d82" stroke-width=".45" fill="none" opacity=".6"/>
<path d="M152.5 186.1 Q141.5 215 142.5 246.4" stroke="#7f7d82" stroke-width=".45" fill="none" opacity=".6"/>
<path d="M154.0 185.6 Q143.0 215 144.0 244.6" stroke="#7f7d82" stroke-width=".45" fill="none" opacity=".6"/>
<path d="M155.5 185.9 Q144.5 215 145.5 243.9" stroke="#7f7d82" stroke-width=".45" fill="none" opacity=".6"/>
<path d="M157.0 190.9 Q146.0 215 147.0 243.3" stroke="#7f7d82" stroke-width=".45" fill="none" opacity=".6"/>
<path d="M158.5 189.6 Q147.5 215 148.5 245.6" stroke="#7f7d82" stroke-width=".45" fill="none" opacity=".6"/>
<path d="M160.0 185.6 Q149.0 215 150.0 244.6" stroke="#7f7d82" stroke-width=".45" fill="none" opacity=".6"/>
<path d="M161.5 191.2 Q150.5 215 151.5 245.2" stroke="#7f7d82" stroke-width=".45" fill="none" opacity=".6"/>
<path d="M163.0 184.2 Q152.0 215 153.0 247.9" stroke="#7f7d82" stroke-width=".45" fill="none" opacity=".6"/>
<path d="M164.5 184.6 Q153.5 215 154.5 247.6" stroke="#7f7d82" stroke-width=".45" fill="none" opacity=".6"/>
<path d="M166.0 190.3 Q155.0 215 156.0 247.1" stroke="#7f7d82" stroke-width=".45" fill="none" opacity=".6"/>
<path d="M167.5 184.4 Q156.5 215 157.5 247.3" stroke="#7f7d82" stroke-width=".45" fill="none" opacity=".6"/>
<path d="M267.0 191.1 Q280.0 215 280.0 241.2" stroke="#7f7d82" stroke-width=".45" fill="none" opacity=".6"/>
<path d="M268.4 190.2 Q281.4 215 281.4 236.6" stroke="#7f7d82" stroke-width=".45" fill="none" opacity=".6"/>
<path d="M269.8 185.7 Q282.8 215 282.8 238.0" stroke="#7f7d82" stroke-width=".45" fill="none" opacity=".6"/>
<path d="M271.2 191.1 Q284.2 215 284.2 242.2" stroke="#7f7d82" stroke-width=".45" fill="none" opacity=".6"/>
<path d="M272.6 185.1 Q285.6 215 285.6 241.0" stroke="#7f7d82" stroke-width=".45" fill="none" opacity=".6"/>
<path d="M274.0 189.4 Q287.0 215 287.0 236.3" stroke="#7f7d82" stroke-width=".45" fill="none" opacity=".6"/>
<path d="M275.4 191.5 Q288.4 215 288.4 237.4" stroke="#7f7d82" stroke-width=".45" fill="none" opacity=".6"/>
<path d="M276.8 184.4 Q289.8 215 289.8 237.5" stroke="#7f7d82" stroke-width=".45" fill="none" opacity=".6"/>
<path d="M278.2 184.7 Q291.2 215 291.2 242.4" stroke="#7f7d82" stroke-width=".45" fill="none" opacity=".6"/>
<path d="M279.6 184.9 Q292.6 215 292.6 238.1" stroke="#7f7d82" stroke-width=".45" fill="none" opacity=".6"/>
<path d="M281.0 191.3 Q294.0 215 294.0 236.3" stroke="#7f7d82" stroke-width=".45" fill="none" opacity=".6"/>
<path d="M282.4 187.6 Q295.4 215 295.4 241.9" stroke="#7f7d82" stroke-width=".45" fill="none" opacity=".6"/>
<path d="M283.8 186.7 Q296.8 215 296.8 236.2" stroke="#7f7d82" stroke-width=".45" fill="none" opacity=".6"/>
<path d="M285.2 186.7 Q298.2 215 298.2 239.0" stroke="#7f7d82" stroke-width=".45" fill="none" opacity=".6"/>
<g clip-path="url(#slclip)">
<path d="M150.0 186.0 l-2.7 17.7" stroke="#8a888d" stroke-width=".5" opacity=".55"/>
<path d="M262.0 166.0 l2.2 15.9" stroke="#8a888d" stroke-width=".5" opacity=".55"/>
<path d="M151.8 184.4 l-2.5 13.8" stroke="#8a888d" stroke-width=".5" opacity=".55"/>
<path d="M263.8 167.2 l2.7 10.9" stroke="#8a888d" stroke-width=".5" opacity=".55"/>
<path d="M153.6 182.8 l-1.3 15.3" stroke="#8a888d" stroke-width=".5" opacity=".55"/>
<path d="M265.6 168.4 l1.6 13.0" stroke="#8a888d" stroke-width=".5" opacity=".55"/>
<path d="M155.4 181.2 l-0.9 18.4" stroke="#8a888d" stroke-width=".5" opacity=".55"/>
<path d="M267.4 169.6 l2.0 14.4" stroke="#8a888d" stroke-width=".5" opacity=".55"/>
<path d="M157.2 179.6 l-1.2 18.0" stroke="#8a888d" stroke-width=".5" opacity=".55"/>
<path d="M269.2 170.8 l2.0 21.3" stroke="#8a888d" stroke-width=".5" opacity=".55"/>
<path d="M159.0 178.0 l0.3 11.3" stroke="#8a888d" stroke-width=".5" opacity=".55"/>
<path d="M271.0 172.0 l2.8 14.1" stroke="#8a888d" stroke-width=".5" opacity=".55"/>
<path d="M160.8 176.4 l-0.7 16.3" stroke="#8a888d" stroke-width=".5" opacity=".55"/>
<path d="M272.8 173.2 l2.0 16.1" stroke="#8a888d" stroke-width=".5" opacity=".55"/>
<path d="M162.6 174.8 l-2.8 13.5" stroke="#8a888d" stroke-width=".5" opacity=".55"/>
<path d="M274.6 174.4 l2.2 18.9" stroke="#8a888d" stroke-width=".5" opacity=".55"/>
<path d="M164.4 173.2 l-0.4 18.8" stroke="#8a888d" stroke-width=".5" opacity=".55"/>
<path d="M276.4 175.6 l0.4 14.4" stroke="#8a888d" stroke-width=".5" opacity=".55"/>
<path d="M166.2 171.6 l0.7 15.5" stroke="#8a888d" stroke-width=".5" opacity=".55"/>
<path d="M278.2 176.8 l0.3 16.7" stroke="#8a888d" stroke-width=".5" opacity=".55"/>
<path d="M168.0 170.0 l0.7 17.7" stroke="#8a888d" stroke-width=".5" opacity=".55"/>
<path d="M280.0 178.0 l1.9 15.0" stroke="#8a888d" stroke-width=".5" opacity=".55"/>
<path d="M169.8 168.4 l-1.8 12.2" stroke="#8a888d" stroke-width=".5" opacity=".55"/>
<path d="M281.8 179.2 l1.4 19.4" stroke="#8a888d" stroke-width=".5" opacity=".55"/>
<path d="M171.6 166.8 l-0.2 11.3" stroke="#8a888d" stroke-width=".5" opacity=".55"/>
<path d="M283.6 180.4 l0.5 16.6" stroke="#8a888d" stroke-width=".5" opacity=".55"/>
<path d="M173.4 165.2 l-0.7 14.7" stroke="#8a888d" stroke-width=".5" opacity=".55"/>
<path d="M285.4 181.6 l0.3 13.3" stroke="#8a888d" stroke-width=".5" opacity=".55"/>
<path d="M175.2 163.6 l-2.8 11.6" stroke="#8a888d" stroke-width=".5" opacity=".55"/>
<path d="M287.2 182.8 l1.4 13.3" stroke="#8a888d" stroke-width=".5" opacity=".55"/>
<path d="M177.0 162.0 l-0.2 16.2" stroke="#8a888d" stroke-width=".5" opacity=".55"/>
<path d="M289.0 184.0 l2.6 21.3" stroke="#8a888d" stroke-width=".5" opacity=".55"/>
</g>
</svg>
<div class="abs" style="left:26.3px;top:43.50px;width:15.4px;height:15.3px;background:#fdfdfd;border:1px solid #c6c8ca"></div>
<div class="abs" style="left:26.3px;top:66.50px;width:15.4px;height:15.3px;background:#fdfdfd;border:1px solid #c6c8ca"></div>
<div class="abs" style="left:26.3px;top:83.55px;width:15.4px;height:15.3px;background:#fdfdfd;border:1px solid #c6c8ca"></div>
<div class="abs" style="left:26.3px;top:100.60px;width:15.4px;height:15.3px;background:#fdfdfd;border:1px solid #c6c8ca"></div>
<div class="abs" style="left:26.3px;top:117.65px;width:15.4px;height:15.3px;background:#fdfdfd;border:1px solid #9fa1a3"></div>
<div class="abs" style="left:26.3px;top:134.70px;width:15.4px;height:15.3px;background:#fdfdfd;border:1px solid #c6c8ca"></div>
<div class="abs" style="left:26.3px;top:151.75px;width:15.4px;height:15.3px;background:#fdfdfd;border:1px solid #9fa1a3"></div>
<div class="abs" style="left:26.3px;top:168.80px;width:15.4px;height:15.3px;background:#fdfdfd;border:1px solid #c6c8ca"></div>
<svg width="1080" height="608" viewBox="0 0 1080 608">
<path d="M29 50.5l3.2 -3.4l5.6 1.4v6l-3.2 2.6l-5.6 -1.2z" fill="#9a9da0"/><path d="M29 50.5l5.6 1.2l3.2 -3.2M34.6 51.7v5.4" stroke="#7a7d80" stroke-width=".5" fill="none"/><path d="M28.8 54.1l6 1.2l3.4 -2.6v2.4l-3.4 2.6l-6 -1.2z" fill="#4b4d50"/>
<path d="M32 69.5q2.3 1.6 4.6 0l3.8 1.8l-1.5 3l-1.7 -.8v6h-5.8v-6l-1.7 .8l-1.5 -3z" fill="#c9cbcd"/>
<ellipse cx="30.6" cy="78.0" rx="2.7" ry="1.5" fill="#1f1f1f"/><circle cx="30.6" cy="78.0" r=".6" fill="#999"/>
<path d="M34 90.55q2 1.4 4 0l2.8 1.6l-1.2 2.4l-1.2 -.6v3.6h-4.8z" fill="#e4e5e6" stroke="#cfd0d1" stroke-width=".3"/><circle cx="31.8" cy="90.05" r="2.5" fill="#2aa7f5"/><path d="M33.5 89.05l5 -3.6" stroke="#444" stroke-width="1.1"/>
<ellipse cx="30.6" cy="95.35" rx="2.7" ry="1.5" fill="#1f1f1f"/><circle cx="30.6" cy="95.35" r=".6" fill="#999"/>
<circle cx="35" cy="105.8" r="2.9" fill="#d3d5d7"/><path d="M30.5 114.6q0 -5.5 4.5 -5.5t4.8 5.5z" fill="#c2c4c6"/>
<ellipse cx="30.8" cy="112.39999999999999" rx="2.7" ry="1.5" fill="#1f1f1f"/><circle cx="30.8" cy="112.39999999999999" r=".6" fill="#999"/>
<path d="M29.2 123.65l3.2 -2.4l7.8 .4l-1.6 7.2l-6.4 1.6l-3 -1.6z" fill="#1d7fe6"/><path d="M29.2 123.65l3 1l7.6 -2.6" stroke="#5fb0ff" stroke-width=".7" fill="none"/><path d="M31 127.65h4.5v1.6h-4.5z" fill="#cfe4ff" opacity=".8"/>
<path d="M29.8 140.7l3 -2.4l7 .4l-1.4 7l-6 1.6l-2.6 -1.6z" fill="#3a3c3f"/><path d="M29.8 140.7l2.8 1l7 -2.6" stroke="#8d9094" stroke-width=".7" fill="none"/><path d="M32.5 141.7l6 -1.5l-1 4z" fill="#6e7175"/>
<ellipse cx="34.2" cy="157.75" rx="3.2" ry="3.8" fill="#f6b57e"/><path d="M29.2 165.75q.4 -3.6 3.2 -4.2h3.6q2.8 .6 3.2 4.2z" fill="#f3a869"/>
<circle cx="34.8" cy="176.0" r="5.2" fill="#2b90e8"/><path d="M29.6 176.0h10.4M34.8 170.8v10.4M31 172.60000000000002q3.8 2 7.6 0M31 179.4q3.8 -2 7.6 0M34.8 170.8q-4.5 5.2 0 10.4M34.8 170.8q4.5 5.2 0 10.4" stroke="#bfe0ff" stroke-width=".5" fill="none"/>
<ellipse cx="30.6" cy="180.8" rx="2.7" ry="1.5" fill="#1f1f1f"/><circle cx="30.6" cy="180.8" r=".6" fill="#999"/>
</svg>
<div id="view2d" class="abs"></div>
<svg width="1080" height="608" viewBox="0 0 1080 608">
<defs><clipPath id="v2clip"><rect x="395" y="37" width="437" height="556"/></clipPath></defs>
<g clip-path="url(#v2clip)">
<path d="M403.5 37V593M430.4 37V593M457.4 37V593M511.2 37V593M538.2 37V593M565.1 37V593M592.0 37V593M619.0 37V593M645.9 37V593M672.8 37V593M699.7 37V593M726.7 37V593M753.6 37V593M780.5 37V593M807.5 37V593M395 37.0H832M395 64.0H832M395 90.9H832M395 117.8H832M395 144.8H832M395 171.7H832M395 198.6H832M395 225.5H832M395 252.5H832M395 279.4H832M395 306.3H832M395 333.3H832M395 387.1H832M395 414.1H832M395 441.0H832M395 467.9H832M395 494.9H832M395 521.8H832M395 548.7H832M395 575.6H832" stroke="#bfc3c4" stroke-width=".7" fill="none"/>
<path d="M484.3 37V593M395 360.2H832" stroke="#8e9294" stroke-width=".9" fill="none"/>
<clipPath id="bigclip"><path d="M432 210 Q440 208 448 208 C465 208.3 476 212 484.5 217.6 C493.29999999999995 212 504.29999999999995 208.3 521.3 208 Q529.3 208 537.3 210 L537.3 357.8 Q510 357.3 484.5 358.8 Q460 357.3 432 357.8 Z"/></clipPath>
<path d="M432 210 Q440 208 448 208 C465 208.3 476 212 484.5 217.6 C493.29999999999995 212 504.29999999999995 208.3 521.3 208 Q529.3 208 537.3 210 L537.3 357.8 Q510 357.3 484.5 358.8 Q460 357.3 432 357.8 Z" fill="#a98a96"/>
<g clip-path="url(#bigclip)">
<path d="M432.40 205V360" stroke="#988a97" stroke-width=".75"/>
<path d="M433.95 205V360" stroke="#8e8997" stroke-width=".75"/>
<path d="M435.50 205V360" stroke="#c98b97" stroke-width=".75"/>
<path d="M437.05 205V360" stroke="#8e8997" stroke-width=".75"/>
<path d="M438.60 205V360" stroke="#8e8997" stroke-width=".75"/>
<path d="M440.15 205V360" stroke="#988a97" stroke-width=".75"/>
<path d="M441.70 205V360" stroke="#988a97" stroke-width=".75"/>
<path d="M443.25 205V360" stroke="#c98b97" stroke-width=".75"/>
<path d="M444.80 205V360" stroke="#8e8997" stroke-width=".75"/>
<path d="M446.35 205V360" stroke="#c98b97" stroke-width=".75"/>
<path d="M447.90 205V360" stroke="#bd8a96" stroke-width=".75"/>
<path d="M449.45 205V360" stroke="#bd8a96" stroke-width=".75"/>
<path d="M451.00 205V360" stroke="#8e8997" stroke-width=".75"/>
<path d="M452.55 205V360" stroke="#c98b97" stroke-width=".75"/>
<path d="M454.10 205V360" stroke="#988a97" stroke-width=".75"/>
<path d="M455.65 205V360" stroke="#9f8f9b" stroke-width=".75"/>
<path d="M457.20 205V360" stroke="#c98b97" stroke-width=".75"/>
<path d="M458.75 205V360" stroke="#8e8997" stroke-width=".75"/>
<path d="M460.30 205V360" stroke="#bd8a96" stroke-width=".75"/>
<path d="M461.85 205V360" stroke="#c58692" stroke-width=".75"/>
<path d="M463.40 205V360" stroke="#988a97" stroke-width=".75"/>
<path d="M464.95 205V360" stroke="#a58b97" stroke-width=".75"/>
<path d="M466.50 205V360" stroke="#bd8a96" stroke-width=".75"/>
<path d="M468.05 205V360" stroke="#c58692" stroke-width=".75"/>
<path d="M469.60 205V360" stroke="#c98b97" stroke-width=".75"/>
<path d="M471.15 205V360" stroke="#8e8997" stroke-width=".75"/>
<path d="M472.70 205V360" stroke="#9f8f9b" stroke-width=".75"/>
<path d="M474.25 205V360" stroke="#9f8f9b" stroke-width=".75"/>
<path d="M475.80 205V360" stroke="#c58692" stroke-width=".75"/>
<path d="M477.35 205V360" stroke="#c98b97" stroke-width=".75"/>
<path d="M478.90 205V360" stroke="#988a97" stroke-width=".75"/>
<path d="M480.45 205V360" stroke="#988a97" stroke-width=".75"/>
<path d="M482.00 205V360" stroke="#9f8f9b" stroke-width=".75"/>
<path d="M483.55 205V360" stroke="#9f8f9b" stroke-width=".75"/>
<path d="M485.10 205V360" stroke="#c98b97" stroke-width=".75"/>
<path d="M486.65 205V360" stroke="#9f8f9b" stroke-width=".75"/>
<path d="M488.20 205V360" stroke="#bd8a96" stroke-width=".75"/>
<path d="M489.75 205V360" stroke="#c98b97" stroke-width=".75"/>
<path d="M491.30 205V360" stroke="#c58692" stroke-width=".75"/>
<path d="M492.85 205V360" stroke="#8e8997" stroke-width=".75"/>
<path d="M494.40 205V360" stroke="#c98b97" stroke-width=".75"/>
<path d="M495.95 205V360" stroke="#c58692" stroke-width=".75"/>
<path d="M497.50 205V360" stroke="#c58692" stroke-width=".75"/>
<path d="M499.05 205V360" stroke="#c58692" stroke-width=".75"/>
<path d="M500.60 205V360" stroke="#bd8a96" stroke-width=".75"/>
<path d="M502.15 205V360" stroke="#bd8a96" stroke-width=".75"/>
<path d="M503.70 205V360" stroke="#c98b97" stroke-width=".75"/>
<path d="M505.25 205V360" stroke="#c58692" stroke-width=".75"/>
<path d="M506.80 205V360" stroke="#8e8997" stroke-width=".75"/>
<path d="M508.35 205V360" stroke="#988a97" stroke-width=".75"/>
<path d="M509.90 205V360" stroke="#a58b97" stroke-width=".75"/>
<path d="M511.45 205V360" stroke="#988a97" stroke-width=".75"/>
<path d="M513.00 205V360" stroke="#c98b97" stroke-width=".75"/>
<path d="M514.55 205V360" stroke="#8e8997" stroke-width=".75"/>
<path d="M516.10 205V360" stroke="#bd8a96" stroke-width=".75"/>
<path d="M517.65 205V360" stroke="#c98b97" stroke-width=".75"/>
<path d="M519.20 205V360" stroke="#bd8a96" stroke-width=".75"/>
<path d="M520.75 205V360" stroke="#9f8f9b" stroke-width=".75"/>
<path d="M522.30 205V360" stroke="#a58b97" stroke-width=".75"/>
<path d="M523.85 205V360" stroke="#988a97" stroke-width=".75"/>
<path d="M525.40 205V360" stroke="#c58692" stroke-width=".75"/>
<path d="M526.95 205V360" stroke="#9f8f9b" stroke-width=".75"/>
<path d="M528.50 205V360" stroke="#c58692" stroke-width=".75"/>
<path d="M530.05 205V360" stroke="#988a97" stroke-width=".75"/>
<path d="M531.60 205V360" stroke="#9f8f9b" stroke-width=".75"/>
<path d="M533.15 205V360" stroke="#a58b97" stroke-width=".75"/>
<path d="M534.70 205V360" stroke="#988a97" stroke-width=".75"/>
<path d="M536.25 205V360" stroke="#c98b97" stroke-width=".75"/>
<path d="M447.2 205V360" stroke="#7d8594" stroke-width="1.5" opacity=".9"/>
<path d="M467.5 205V360" stroke="#7d8594" stroke-width="1.5" opacity=".9"/>
<path d="M484.5 205V360" stroke="#7d8594" stroke-width="1.5" opacity=".9"/>
<path d="M500.8 205V360" stroke="#7d8594" stroke-width="1.5" opacity=".9"/>
<path d="M520 205V360" stroke="#7d8594" stroke-width="1.5" opacity=".9"/>
<path d="M434.5 205V360" stroke="#6c7280" stroke-width=".7" opacity=".75"/>
<path d="M437.7 205V360" stroke="#6c7280" stroke-width=".7" opacity=".75"/>
<path d="M442.5 205V360" stroke="#6c7280" stroke-width=".7" opacity=".75"/>
<path d="M447.3 205V360" stroke="#6c7280" stroke-width=".7" opacity=".75"/>
<path d="M451.4 205V360" stroke="#6c7280" stroke-width=".7" opacity=".75"/>
<path d="M456.2 205V360" stroke="#6c7280" stroke-width=".7" opacity=".75"/>
<path d="M459.4 205V360" stroke="#6c7280" stroke-width=".7" opacity=".75"/>
<path d="M462.6 205V360" stroke="#6c7280" stroke-width=".7" opacity=".75"/>
<path d="M465.8 205V360" stroke="#6c7280" stroke-width=".7" opacity=".75"/>
<path d="M471.3 205V360" stroke="#6c7280" stroke-width=".7" opacity=".75"/>
<path d="M474.5 205V360" stroke="#6c7280" stroke-width=".7" opacity=".75"/>
<path d="M479.3 205V360" stroke="#6c7280" stroke-width=".7" opacity=".75"/>
<path d="M484.8 205V360" stroke="#6c7280" stroke-width=".7" opacity=".75"/>
<path d="M488.0 205V360" stroke="#6c7280" stroke-width=".7" opacity=".75"/>
<path d="M491.2 205V360" stroke="#6c7280" stroke-width=".7" opacity=".75"/>
<path d="M494.4 205V360" stroke="#6c7280" stroke-width=".7" opacity=".75"/>
<path d="M498.5 205V360" stroke="#6c7280" stroke-width=".7" opacity=".75"/>
<path d="M502.6 205V360" stroke="#6c7280" stroke-width=".7" opacity=".75"/>
<path d="M505.8 205V360" stroke="#6c7280" stroke-width=".7" opacity=".75"/>
<path d="M511.3 205V360" stroke="#6c7280" stroke-width=".7" opacity=".75"/>
<path d="M516.8 205V360" stroke="#6c7280" stroke-width=".7" opacity=".75"/>
<path d="M522.3 205V360" stroke="#6c7280" stroke-width=".7" opacity=".75"/>
<path d="M527.8 205V360" stroke="#6c7280" stroke-width=".7" opacity=".75"/>
<path d="M531.0 205V360" stroke="#6c7280" stroke-width=".7" opacity=".75"/>
<path d="M535.1 205V360" stroke="#6c7280" stroke-width=".7" opacity=".75"/>
<path d="M489 214L497 358" stroke="#7d8594" stroke-width=".9" opacity=".8"/>
<path d="M506 214L516 358" stroke="#7d8594" stroke-width=".9" opacity=".8"/>
<path d="M522 214L527 358" stroke="#7d8594" stroke-width=".9" opacity=".8"/>
<path d="M432 210 Q440 208 448 208 C465 208.3 476 212 484.5 217.6 C493.29999999999995 212 504.29999999999995 208.3 521.3 208 Q529.3 208 537.3 210" stroke="#d87283" stroke-width="9" fill="none" opacity=".7"/>
<rect x="432" y="352" width="105.29999999999995" height="6" fill="#d87283" opacity=".7"/>
</g>
<path d="M432 210 Q440 208 448 208 C465 208.3 476 212 484.5 217.6 C493.29999999999995 212 504.29999999999995 208.3 521.3 208 Q529.3 208 537.3 210" stroke="#17171a" stroke-width="1.5" fill="none"/>
<path d="M432 357.8 Q460 357.3 484.5 358.8 Q510 357.3 537.3 357.8" stroke="#17171a" stroke-width="1.4" fill="none"/>
<path d="M432 210V357.8M537.3 210V357.8" stroke="#b9808c" stroke-width=".7" fill="none"/>
<path d="M484.5 218V358.5" stroke="#a9b8cf" stroke-width="2"/><path d="M484.5 218V358.5" stroke="#2d4f86" stroke-width="1.3" stroke-dasharray="1.2 1.1"/>
<g transform="">
<path d="M502.3 122.9 Q511.3 123.9 519.3 129.4 Q527.3 134.9 534.3 135.1 Q545.3 134.9 555.3 129.4 Q561.3 125.7 567.3 125.4 L573.4 126.9 Q575.4 127.9 575.4 130.9 L575.4 161.6 L494 161.6 L494 129.9 Q494 127.9 496 126.9 Z" fill="none" stroke="#74b4e6" stroke-width="6" stroke-linejoin="round"/>
<path d="M502.3 122.9 Q511.3 123.9 519.3 129.4 Q527.3 134.9 534.3 135.1 Q545.3 134.9 555.3 129.4 Q561.3 125.7 567.3 125.4 L573.4 126.9 Q575.4 127.9 575.4 130.9 L575.4 161.6 L494 161.6 L494 129.9 Q494 127.9 496 126.9 Z" fill="#b9c3d2"/>
<clipPath id="sc1"><path d="M502.3 122.9 Q511.3 123.9 519.3 129.4 Q527.3 134.9 534.3 135.1 Q545.3 134.9 555.3 129.4 Q561.3 125.7 567.3 125.4 L567.3 161.6 L502.3 161.6 Z"/></clipPath>
<g clip-path="url(#sc1)"><rect x="502.3" y="120.9" width="64.99999999999994" height="45" fill="#c48f9a"/>
<path d="M502.60 120.9V161.6" stroke="#b9a0aa" stroke-width=".8"/>
<path d="M504.20 120.9V161.6" stroke="#cb8b96" stroke-width=".8"/>
<path d="M505.80 120.9V161.6" stroke="#cd808d" stroke-width=".8"/>
<path d="M507.40 120.9V161.6" stroke="#b9a0aa" stroke-width=".8"/>
<path d="M509.00 120.9V161.6" stroke="#cf8490" stroke-width=".8"/>
<path d="M510.60 120.9V161.6" stroke="#94909f" stroke-width=".8"/>
<path d="M512.20 120.9V161.6" stroke="#cb8b96" stroke-width=".8"/>
<path d="M513.80 120.9V161.6" stroke="#c3a3ab" stroke-width=".8"/>
<path d="M515.40 120.9V161.6" stroke="#b9aab2" stroke-width=".8"/>
<path d="M517.00 120.9V161.6" stroke="#cb8b96" stroke-width=".8"/>
<path d="M518.60 120.9V161.6" stroke="#cf8490" stroke-width=".8"/>
<path d="M520.20 120.9V161.6" stroke="#cf8490" stroke-width=".8"/>
<path d="M521.80 120.9V161.6" stroke="#c98893" stroke-width=".8"/>
<path d="M523.40 120.9V161.6" stroke="#c98893" stroke-width=".8"/>
<path d="M525.00 120.9V161.6" stroke="#c3a3ab" stroke-width=".8"/>
<path d="M526.60 120.9V161.6" stroke="#a59aa6" stroke-width=".8"/>
<path d="M528.20 120.9V161.6" stroke="#b9aab2" stroke-width=".8"/>
<path d="M529.80 120.9V161.6" stroke="#c98893" stroke-width=".8"/>
<path d="M531.40 120.9V161.6" stroke="#a59aa6" stroke-width=".8"/>
<path d="M533.00 120.9V161.6" stroke="#b9aab2" stroke-width=".8"/>
<path d="M534.60 120.9V161.6" stroke="#c3a3ab" stroke-width=".8"/>
<path d="M536.20 120.9V161.6" stroke="#94909f" stroke-width=".8"/>
<path d="M537.80 120.9V161.6" stroke="#94909f" stroke-width=".8"/>
<path d="M539.40 120.9V161.6" stroke="#cb8b96" stroke-width=".8"/>
<path d="M541.00 120.9V161.6" stroke="#94909f" stroke-width=".8"/>
<path d="M542.60 120.9V161.6" stroke="#94909f" stroke-width=".8"/>
<path d="M544.20 120.9V161.6" stroke="#b9aab2" stroke-width=".8"/>
<path d="M545.80 120.9V161.6" stroke="#cf8490" stroke-width=".8"/>
<path d="M547.40 120.9V161.6" stroke="#cd808d" stroke-width=".8"/>
<path d="M549.00 120.9V161.6" stroke="#cd808d" stroke-width=".8"/>
<path d="M550.60 120.9V161.6" stroke="#cf8490" stroke-width=".8"/>
<path d="M552.20 120.9V161.6" stroke="#b9aab2" stroke-width=".8"/>
<path d="M553.80 120.9V161.6" stroke="#c3a3ab" stroke-width=".8"/>
<path d="M555.40 120.9V161.6" stroke="#94909f" stroke-width=".8"/>
<path d="M557.00 120.9V161.6" stroke="#cb8b96" stroke-width=".8"/>
<path d="M558.60 120.9V161.6" stroke="#cf8490" stroke-width=".8"/>
<path d="M560.20 120.9V161.6" stroke="#c3a3ab" stroke-width=".8"/>
<path d="M561.80 120.9V161.6" stroke="#b9aab2" stroke-width=".8"/>
<path d="M563.40 120.9V161.6" stroke="#c98893" stroke-width=".8"/>
<path d="M565.00 120.9V161.6" stroke="#cd808d" stroke-width=".8"/>
<path d="M566.60 120.9V161.6" stroke="#cf8490" stroke-width=".8"/>
<path d="M511.3 122.9V161.6" stroke="#6f7889" stroke-width="1.1" opacity=".9"/>
<path d="M516.3 122.9V161.6" stroke="#6f7889" stroke-width="1.1" opacity=".9"/>
<path d="M533.8 122.9V161.6" stroke="#6f7889" stroke-width="1.1" opacity=".9"/>
<path d="M544.3 122.9V161.6" stroke="#6f7889" stroke-width="1.1" opacity=".9"/>
<path d="M552.3 122.9V161.6" stroke="#6f7889" stroke-width="1.1" opacity=".9"/>
<path d="M502.3 122.9 Q511.3 123.9 519.3 129.4 Q527.3 134.9 534.3 135.1 Q545.3 134.9 555.3 129.4 Q561.3 125.7 567.3 125.4" stroke="#dc6f80" stroke-width="9" fill="none" opacity=".75"/>
<rect x="502.3" y="156.0" width="64.99999999999994" height="5.6" fill="#dc6c7d" opacity=".9"/></g>
<path d="M502.3 122.9 Q511.3 123.9 519.3 129.4 Q527.3 134.9 534.3 135.1 Q545.3 134.9 555.3 129.4 Q561.3 125.7 567.3 125.4" stroke="#141416" stroke-width="1.6" fill="none"/>
<path d="M502.3 161.6H567.3" stroke="#141416" stroke-width="1.3"/>
<path d="M494 161.6H502.3M567.3 161.6H575.4" stroke="#3fae4f" stroke-width="1.2"/>
<path d="M494 129.9V161.6M575.4 130.9V161.6M502.3 122.9V161.6M567.3 125.4V161.6" stroke="#4b4f5c" stroke-width=".6" fill="none"/>
<path d="M522.3 123.9l4 9M542.3 125.9l-4 7M518.3 127.9h32" stroke="#8d86b8" stroke-width=".5" fill="none" opacity=".8"/>
<path d="M567.8 125.9l2.4 2.6" stroke="#e8343c" stroke-width=".9"/>
</g>
<g transform="translate(1188.2 12.65) scale(-1 1)">
<path d="M502.3 122.9 Q511.3 123.9 519.3 129.4 Q527.3 134.9 534.3 135.1 Q545.3 134.9 555.3 129.4 Q561.3 125.7 567.3 125.4 L573.4 126.9 Q575.4 127.9 575.4 130.9 L575.4 161.6 L494 161.6 L494 129.9 Q494 127.9 496 126.9 Z" fill="none" stroke="#74b4e6" stroke-width="6" stroke-linejoin="round"/>
<path d="M502.3 122.9 Q511.3 123.9 519.3 129.4 Q527.3 134.9 534.3 135.1 Q545.3 134.9 555.3 129.4 Q561.3 125.7 567.3 125.4 L573.4 126.9 Q575.4 127.9 575.4 130.9 L575.4 161.6 L494 161.6 L494 129.9 Q494 127.9 496 126.9 Z" fill="#b9c3d2"/>
<clipPath id="sc2"><path d="M502.3 122.9 Q511.3 123.9 519.3 129.4 Q527.3 134.9 534.3 135.1 Q545.3 134.9 555.3 129.4 Q561.3 125.7 567.3 125.4 L567.3 161.6 L502.3 161.6 Z"/></clipPath>
<g clip-path="url(#sc2)"><rect x="502.3" y="120.9" width="64.99999999999994" height="45" fill="#c48f9a"/>
<path d="M502.60 120.9V161.6" stroke="#b9a0aa" stroke-width=".8"/>
<path d="M504.20 120.9V161.6" stroke="#cd808d" stroke-width=".8"/>
<path d="M505.80 120.9V161.6" stroke="#94909f" stroke-width=".8"/>
<path d="M507.40 120.9V161.6" stroke="#cb8b96" stroke-width=".8"/>
<path d="M509.00 120.9V161.6" stroke="#cb8b96" stroke-width=".8"/>
<path d="M510.60 120.9V161.6" stroke="#cb8b96" stroke-width=".8"/>
<path d="M512.20 120.9V161.6" stroke="#b9aab2" stroke-width=".8"/>
<path d="M513.80 120.9V161.6" stroke="#b9aab2" stroke-width=".8"/>
<path d="M515.40 120.9V161.6" stroke="#cf8490" stroke-width=".8"/>
<path d="M517.00 120.9V161.6" stroke="#b9a0aa" stroke-width=".8"/>
<path d="M518.60 120.9V161.6" stroke="#b9a0aa" stroke-width=".8"/>
<path d="M520.20 120.9V161.6" stroke="#c98893" stroke-width=".8"/>
<path d="M521.80 120.9V161.6" stroke="#c3a3ab" stroke-width=".8"/>
<path d="M523.40 120.9V161.6" stroke="#c98893" stroke-width=".8"/>
<path d="M525.00 120.9V161.6" stroke="#c3a3ab" stroke-width=".8"/>
<path d="M526.60 120.9V161.6" stroke="#94909f" stroke-width=".8"/>
<path d="M528.20 120.9V161.6" stroke="#c3a3ab" stroke-width=".8"/>
<path d="M529.80 120.9V161.6" stroke="#c3a3ab" stroke-width=".8"/>
<path d="M531.40 120.9V161.6" stroke="#cd808d" stroke-width=".8"/>
<path d="M533.00 120.9V161.6" stroke="#b9aab2" stroke-width=".8"/>
<path d="M534.60 120.9V161.6" stroke="#b9aab2" stroke-width=".8"/>
<path d="M536.20 120.9V161.6" stroke="#b9aab2" stroke-width=".8"/>
<path d="M537.80 120.9V161.6" stroke="#c3a3ab" stroke-width=".8"/>
<path d="M539.40 120.9V161.6" stroke="#a59aa6" stroke-width=".8"/>
<path d="M541.00 120.9V161.6" stroke="#b9aab2" stroke-width=".8"/>
<path d="M542.60 120.9V161.6" stroke="#94909f" stroke-width=".8"/>
<path d="M544.20 120.9V161.6" stroke="#c98893" stroke-width=".8"/>
<path d="M545.80 120.9V161.6" stroke="#cb8b96" stroke-width=".8"/>
<path d="M547.40 120.9V161.6" stroke="#94909f" stroke-width=".8"/>
<path d="M549.00 120.9V161.6" stroke="#cf8490" stroke-width=".8"/>
<path d="M550.60 120.9V161.6" stroke="#cb8b96" stroke-width=".8"/>
<path d="M552.20 120.9V161.6" stroke="#cb8b96" stroke-width=".8"/>
<path d="M553.80 120.9V161.6" stroke="#cf8490" stroke-width=".8"/>
<path d="M555.40 120.9V161.6" stroke="#a59aa6" stroke-width=".8"/>
<path d="M557.00 120.9V161.6" stroke="#cd808d" stroke-width=".8"/>
<path d="M558.60 120.9V161.6" stroke="#b9aab2" stroke-width=".8"/>
<path d="M560.20 120.9V161.6" stroke="#94909f" stroke-width=".8"/>
<path d="M561.80 120.9V161.6" stroke="#cd808d" stroke-width=".8"/>
<path d="M563.40 120.9V161.6" stroke="#94909f" stroke-width=".8"/>
<path d="M565.00 120.9V161.6" stroke="#c98893" stroke-width=".8"/>
<path d="M566.60 120.9V161.6" stroke="#cd808d" stroke-width=".8"/>
<path d="M511.3 122.9V161.6" stroke="#6f7889" stroke-width="1.1" opacity=".9"/>
<path d="M516.3 122.9V161.6" stroke="#6f7889" stroke-width="1.1" opacity=".9"/>
<path d="M533.8 122.9V161.6" stroke="#6f7889" stroke-width="1.1" opacity=".9"/>
<path d="M544.3 122.9V161.6" stroke="#6f7889" stroke-width="1.1" opacity=".9"/>
<path d="M552.3 122.9V161.6" stroke="#6f7889" stroke-width="1.1" opacity=".9"/>
<path d="M502.3 122.9 Q511.3 123.9 519.3 129.4 Q527.3 134.9 534.3 135.1 Q545.3 134.9 555.3 129.4 Q561.3 125.7 567.3 125.4" stroke="#dc6f80" stroke-width="9" fill="none" opacity=".75"/>
<rect x="502.3" y="156.0" width="64.99999999999994" height="5.6" fill="#dc6c7d" opacity=".9"/></g>
<path d="M502.3 122.9 Q511.3 123.9 519.3 129.4 Q527.3 134.9 534.3 135.1 Q545.3 134.9 555.3 129.4 Q561.3 125.7 567.3 125.4" stroke="#141416" stroke-width="1.6" fill="none"/>
<path d="M502.3 161.6H567.3" stroke="#141416" stroke-width="1.3"/>
<path d="M494 161.6H502.3M567.3 161.6H575.4" stroke="#3fae4f" stroke-width="1.2"/>
<path d="M494 129.9V161.6M575.4 130.9V161.6M502.3 122.9V161.6M567.3 125.4V161.6" stroke="#4b4f5c" stroke-width=".6" fill="none"/>
<path d="M522.3 123.9l4 9M542.3 125.9l-4 7M518.3 127.9h32" stroke="#8d86b8" stroke-width=".5" fill="none" opacity=".8"/>
<path d="M567.8 125.9l2.4 2.6" stroke="#e8343c" stroke-width=".9"/>
</g>
<path d="M539.1 165.8H555.4" stroke="#74b4e6" stroke-width="4" stroke-linecap="round"/><path d="M539.1 165.8H555.4" stroke="#4a4d55" stroke-width="1.4"/>
<path d="M649.6 179.3H667.1" stroke="#74b4e6" stroke-width="4" stroke-linecap="round"/><path d="M649.6 179.3H667.1" stroke="#4a4d55" stroke-width="1.4"/>
<path d="M523.5999999999999 107.9 Q528.3 104.4 533.3 104.7 Q538.3 104.4 543.0 107.9 Q541.5 116.2 534.8 121.1 Q533.3 121.9 531.8 121.1 Q525.0999999999999 116.2 523.5999999999999 107.9Z" fill="none" stroke="#74b4e6" stroke-width="4.6" stroke-linejoin="round"/>
<path d="M523.5999999999999 107.9 Q528.3 104.4 533.3 104.7 Q538.3 104.4 543.0 107.9 Q541.5 116.2 534.8 121.1 Q533.3 121.9 531.8 121.1 Q525.0999999999999 116.2 523.5999999999999 107.9Z" fill="#c9cdd4" stroke="#2f3a58" stroke-width=".7"/>
<path d="M525.0 113.5H541.5999999999999" stroke="#4d6ea8" stroke-width=".6"/>
<path d="M533.3 106.2v4.4M526.3 107.9l4 2.6M540.3 107.9l-4 2.6" stroke="#e8212b" stroke-width="1.3" fill="none"/>
<path d="M647.4 130.4 Q652.1 126.9 657.1 127.2 Q662.1 126.9 666.8000000000001 130.4 Q665.3000000000001 138.7 658.6 143.6 Q657.1 144.4 655.6 143.6 Q648.9 138.7 647.4 130.4Z" fill="none" stroke="#74b4e6" stroke-width="4.6" stroke-linejoin="round"/>
<path d="M647.4 130.4 Q652.1 126.9 657.1 127.2 Q662.1 126.9 666.8000000000001 130.4 Q665.3000000000001 138.7 658.6 143.6 Q657.1 144.4 655.6 143.6 Q648.9 138.7 647.4 130.4Z" fill="#c9cdd4" stroke="#2f3a58" stroke-width=".7"/>
<path d="M648.8000000000001 136.0H665.4" stroke="#4d6ea8" stroke-width=".6"/>
<path d="M657.1 128.7v4.4M650.1 130.4l4 2.6M664.1 130.4l-4 2.6" stroke="#e8212b" stroke-width="1.3" fill="none"/>
<path d="M543.5 113.4L647 133.2M567.3 145.6L620.9 151.2M555.6 166L612 173.5M596.3 179.4L633 186.3" stroke="#557db0" stroke-width=".7" fill="none" opacity=".9"/>
<path d="M589.6 173 Q596.6 178 594.8 184" stroke="#74b4e6" stroke-width="6.4" fill="none" stroke-linecap="round"/>
<path d="M572 184.9 Q584 192.6 594.8 183.6" stroke="#4b4136" stroke-width="4.4" fill="none"/>
<path d="M572.5 185.2 Q584 192.3 594.3 183.9" stroke="#e3c3a1" stroke-width="3.1" fill="none"/>
<path d="M589.5 172.9 Q596.8 178 594.8 184.4" stroke="#4b4136" stroke-width="4.4" fill="none"/>
<path d="M589.8 173.3 Q596.5 178 594.8 184" stroke="#a9998d" stroke-width="3.1" fill="none"/>
<path d="M583.1 186.5v3.8" stroke="#2b2b2b" stroke-width=".9"/>
<path d="M635.8 192.3 Q636.6 186 641.2 182" stroke="#74b4e6" stroke-width="6.6" fill="none" stroke-linecap="round"/>
<path d="M635.8 192.6 Q636.6 186 641.4 181.8" stroke="#4b4136" stroke-width="4.2" fill="none"/>
<path d="M635.9 192.2 Q636.8 186.2 641 182.2" stroke="#a9998d" stroke-width="3" fill="none"/>
<path d="M639.7 183.6l2.2 -2" stroke="#35c043" stroke-width="3.2"/>
<path d="M560.7 199.7 L572.6 195.3 Q576 199.5 581.8 200 Q588 199.5 591 195.3 L603 199.7 L600 210.4 Q590 211.5 581.8 218 Q574 211.5 563.4 210.4 Z" fill="#cfd0d3" stroke="#4a4a50" stroke-width=".6"/>
<path d="M581.8 200V218" stroke="#27498a" stroke-width="1.4" stroke-dasharray="1.2 .9"/>
<path d="M564.3 209.3l4.5 -.9M595 208.4l4.5 .9" stroke="#e8343c" stroke-width="1.3"/>
<circle cx="560.7" cy="199.7" r=".7" fill="#222"/>
<circle cx="572.6" cy="195.3" r=".7" fill="#222"/>
<circle cx="591" cy="195.3" r=".7" fill="#222"/>
<circle cx="603" cy="199.7" r=".7" fill="#222"/>
<circle cx="600" cy="210.4" r=".7" fill="#222"/>
<circle cx="563.4" cy="210.4" r=".7" fill="#222"/>
<circle cx="581.8" cy="218" r=".7" fill="#222"/>
<circle cx="581.8" cy="200" r=".7" fill="#222"/>
<path d="M605.6 201.2 L617.8 197.8 Q621 202.6 628.6 202.8 Q636 202.6 638.5 198.2 L651 201.8 L649.3 218.5 L608 218.5 Z" fill="#cfd0d3" stroke="#55555c" stroke-width=".6"/>
<path d="M608 218.5H649.3" stroke="#9a92c8" stroke-width=".9"/>
<path d="M628.6 202.8V219" stroke="#27498a" stroke-width="1.4" stroke-dasharray="1.2 .9"/>
<path d="M608.8 211.8h5M643 211.8h5" stroke="#e8343c" stroke-width="1.6"/>
<circle cx="605.6" cy="201.2" r=".7" fill="#222"/>
<circle cx="617.8" cy="197.8" r=".7" fill="#222"/>
<circle cx="608" cy="218.5" r=".7" fill="#222"/>
<circle cx="628.6" cy="219" r=".7" fill="#222"/>
<path d="M655 228.5 L657 232.2 Q665 233.4 673 233.2 L693 233.2 Q701 233.4 709.3 232.2 L711.3 228.5 L800.2 346 Q745 380 682.8 380 Q620 380 566 346.2 Z" fill="#c2c0c2" fill-opacity=".7"/>
<path d="M566 346.2 Q620 380 682.8 380 Q745 380 800.2 346" stroke="#3a3a40" stroke-width=".7" fill="none"/>
<path d="M655 228.5 L657 232.2 Q665 233.4 673 233.2 M693 233.2 Q701 233.4 709.3 232.2 L711.3 228.5" stroke="#3a3a40" stroke-width=".7" fill="none"/>
<path d="M655 228.5L566 346.2M711.3 228.5L800.2 346" stroke="#8b3430" stroke-width="1.1" fill="none"/>
<path d="M652.8 241L610.5 366.5M713.6 241L755.5 366.5" stroke="#9c98cc" stroke-width=".7" fill="none"/>
<ellipse cx="654.3" cy="236.3" rx="1.8" ry="4.6" fill="#c9c9cb" stroke="#3a3a40" stroke-width=".5" transform="rotate(14 654.3 236.3)"/><ellipse cx="712" cy="236.3" rx="1.8" ry="4.6" fill="#c9c9cb" stroke="#3a3a40" stroke-width=".5" transform="rotate(-14 712 236.3)"/>
<rect x="673" y="233.2" width="20" height="146.8" fill="#a18b99"/>
<path d="M673.8 234V379.5" stroke="#a58b99" stroke-width="1"/>
<path d="M675.6 234V379.5" stroke="#b58896" stroke-width="1"/>
<path d="M677.4 234V379.5" stroke="#9c8a99" stroke-width="1"/>
<path d="M679.2 234V379.5" stroke="#b98a97" stroke-width="1"/>
<path d="M681 234V379.5" stroke="#a88a98" stroke-width="1"/>
<path d="M683.3 234V379.5" stroke="#f0606a" stroke-width="1"/>
<path d="M685.4 234V379.5" stroke="#c07c8a" stroke-width="1"/>
<path d="M687.2 234V379.5" stroke="#8f8b9b" stroke-width="1"/>
<path d="M689 234V379.5" stroke="#7f8a9c" stroke-width="1"/>
<path d="M690.8 234V379.5" stroke="#8a8c9d" stroke-width="1"/>
<path d="M692.4 234V379.5" stroke="#7d8797" stroke-width="1"/>
<rect x="673" y="234.3" width="20" height="5.2" fill="#e0677a" opacity=".8"/><rect x="673" y="373.5" width="20" height="5.5" fill="#e0677a" opacity=".8"/>
<path d="M673 233.6H693M673 379.8H693" stroke="#141416" stroke-width="1.6"/>
<path d="M651.5 230.3l3.6 -1.8M654 232.6l1.2 -4M714.8 230.3l-3.6 -1.8M712.3 232.6l-1.2 -4M566.5 344.2l4 .8M566.8 348l3.6 -1.4M799.8 344l-4 .8M799.5 347.8l-3.6 -1.4" stroke="#ee2a2a" stroke-width=".9" fill="none"/>
<path d="M477.4 381.8 Q480 379.4 483 379.4 Q490 380 495.7 388 Q502 380 509.5 379.4 Q513 379.6 516 383 L516.6 391 L519.6 392.4 L560 513 Q530 524 495.7 526 Q462 524 431.7 513 L472 392.4 L475 391 Z" fill="#c2c0c2" fill-opacity=".7" stroke="#48484e" stroke-width=".6"/>
<path d="M495.7 388.5V526" stroke="#27498a" stroke-width="1.4" stroke-dasharray="1.2 .9"/>
<path d="M663.9 393.4 L703.3 393.4 L705.5 401 L708.6 402.4 L748.3 523.6 Q718 535 684.3 536.6 Q650 535 618.9 523.6 L659.3 402.4 L662.2 401 Z" fill="#c2c0c2" fill-opacity=".7" stroke="#48484e" stroke-width=".6"/>
<path d="M663.9 393.4 Q684 395.5 703.3 393.4" stroke="#8f8fd8" stroke-width=".8" fill="none"/>
<path d="M684.3 394.5V536.6" stroke="#27498a" stroke-width="1.4" stroke-dasharray="1.2 .9"/>
<circle cx="431.7" cy="513" r=".7" fill="#222"/>
<circle cx="560" cy="513" r=".7" fill="#222"/>
<circle cx="618.9" cy="523.6" r=".7" fill="#222"/>
<circle cx="748.3" cy="523.6" r=".7" fill="#222"/>
<circle cx="495.7" cy="526" r=".7" fill="#222"/>
<circle cx="684.3" cy="536.6" r=".7" fill="#222"/>
</g>
<rect x="401.5" y="43.5" width="15" height="15.5" fill="#ccd0d1" stroke="#b4b8ba" stroke-width=".8"/>
<rect x="401.5" y="60.5" width="15" height="15.5" fill="#ccd0d1" stroke="#b4b8ba" stroke-width=".8"/>
<rect x="401.5" y="77.5" width="15" height="15.5" fill="#ccd0d1" stroke="#b4b8ba" stroke-width=".8"/>
<rect x="401.5" y="94.5" width="15" height="15.5" fill="#ccd0d1" stroke="#b4b8ba" stroke-width=".8"/>
<rect x="401.5" y="111.5" width="15" height="15.5" fill="#ccd0d1" stroke="#b4b8ba" stroke-width=".8"/>
<path d="M405 47.5l8.5 7.5" stroke="#333" stroke-width="2"/><path d="M404.5 47l3 6" stroke="#58a9dc" stroke-width=".8"/><ellipse cx="406.5" cy="55.5" rx="2.6" ry="1.5" fill="#333"/>
<path d="M406.5 63.5q2.5 1.6 5 0l3.6 1.8l-1.5 3l-1.7 -.8v6h-5.8v-6l-1.7 .8l-1.5 -3z" fill="#fdfdfd" stroke="#b5b8ba" stroke-width=".4"/><ellipse cx="405.8" cy="72.5" rx="2.6" ry="1.5" fill="#333"/>
<circle cx="410" cy="85" r="5.4" fill="#3b3f44"/><text x="408.5" y="88.3" font-size="8.5" font-style="italic" font-weight="bold" font-family="Liberation Serif, serif" fill="#35b1f2">i</text><ellipse cx="405.5" cy="90.3" rx="2.4" ry="1.4" fill="#333"/>
<path d="M406 98.5l7 -1v8.5l-7 1.5z" fill="#a9adaf" stroke="#8c9092" stroke-width=".5"/><path d="M404.5 100l6 -1v8l-6 1.5z" fill="#bfc3c5" stroke="#8c9092" stroke-width=".5"/>
<path d="M407 114.8q2.3 1.5 4.6 0l3.4 1.7l-1.4 2.8l-1.6 -.7v5.6h-5.4v-5.6l-1.6 .7l-1.4 -2.8z" fill="#e6e8e9" stroke="#b5b8ba" stroke-width=".4"/><rect x="403.5" y="121" width="4" height="3.6" fill="#555"/><path d="M404.3 121v-1.2a1.2 1.2 0 0 1 2.4 0v1.2" stroke="#555" stroke-width=".7" fill="none"/>
</svg>
<div id="rtoolA" class="abs"></div>
<div id="rtoolB" class="abs"></div>
<svg width="1080" height="608" viewBox="0 0 1080 608">
<rect x="832.7" y="42.5" width="16.8" height="14" fill="#1d2022"/>
<path d="M833.5 44.5l3.2 2.2l-3.2 2.2z" fill="#4a4c4d"/>
<path d="M838 55h8.8v-7.4z" fill="#1fc6ee"/>
<path d="M833.5 63.400000000000006l3.2 2.2l-3.2 2.2z" fill="#8d8f90"/>
<path d="M836.5 73.9h8.5v-8.5z" fill="none" stroke="#9a9c9d" stroke-width=".8"/>
<circle cx="836.5" cy="73.9" r="0.9" fill="#c6c7c8"/>
<circle cx="845" cy="73.9" r="0.9" fill="#c6c7c8"/>
<circle cx="845" cy="65.4" r="0.9" fill="#c6c7c8"/>
<path d="M849 76.4v-2.2l-2.2 2.2z" fill="#5d5f60"/>
<path d="M833.5 81.5l3.2 2.2l-3.2 2.2z" fill="#8d8f90"/>
<path d="M838.5 93.0q4 -1 4.5 -5t4.5 -5" fill="none" stroke="#9a9c9d" stroke-width=".9"/>
<circle cx="838.5" cy="93.0" r="0.9" fill="#c6c7c8"/>
<circle cx="847.5" cy="83.0" r="0.9" fill="#c6c7c8"/>
<path d="M833.5 100.4l3.2 2.2l-3.2 2.2z" fill="#8d8f90"/>
<path d="M838.5 111.9q4 -1 4.5 -5t4.5 -5" fill="none" stroke="#9a9c9d" stroke-width=".9"/>
<circle cx="838.5" cy="111.9" r="0.9" fill="#c6c7c8"/>
<circle cx="843" cy="106.9" r="0.9" fill="#c6c7c8"/>
<circle cx="847.5" cy="101.9" r="0.9" fill="#c6c7c8"/>
<path d="M835.5 133l12 -10" stroke="#9a9c9d" stroke-width=".9"/>
<circle cx="841.5" cy="128" r="1.9" fill="#9a9c9d"/>
<circle cx="835.5" cy="133" r="0.8" fill="#c6c7c8"/>
<circle cx="847.5" cy="123" r="0.8" fill="#c6c7c8"/>
<path d="M833.5 137.3l3.2 2.2l-3.2 2.2z" fill="#8d8f90"/>
<path d="M837.5 152.3l9 -10M841 146.3l6.5 5.5" stroke="#c6c7c8" stroke-width=".9"/>
<circle cx="842" cy="147.10000000000002" r="1.1" fill="#fff"/>
<path d="M833.5 159l3.2 2.2l-3.2 2.2z" fill="#8d8f90"/>
<path d="M836.5 170h9.5v-9.5M837 170q6 -1 8.8 -9" fill="none" stroke="#9a9c9d" stroke-width=".8" stroke-dasharray="1.2 .8"/>
<circle cx="846" cy="170" r="0.9" fill="#c6c7c8"/>
<circle cx="846" cy="160.5" r="0.9" fill="#c6c7c8"/>
<circle cx="836.5" cy="170" r="0.9" fill="#c6c7c8"/>
<rect x="835" y="182" width="6" height="8" fill="#6f7172"/><path d="M841 181l6 7l-6.5 3z" fill="none" stroke="#c6c7c8" stroke-width=".9"/>
<circle cx="847" cy="188" r="0.9" fill="#c6c7c8"/>
<circle cx="840.5" cy="191" r="0.9" fill="#c6c7c8"/>
<path d="M849.5 194v-2.2l-2.2 2.2z" fill="#5d5f60"/>
<path d="M835.5 210.2v-9h6.5l5 4v5z" fill="#6f7172"/>
<path d="M849.5 213.2v-2.2l-2.2 2.2z" fill="#5d5f60"/>
<rect x="834.5" y="219.6" width="12.5" height="10.5" fill="#6f7172"/><path d="M837 228.1v-6h3.5l4 3v3z" fill="none" stroke="#c6c7c8" stroke-width=".8"/>
<path d="M849.5 232.1v-2.2l-2.2 2.2z" fill="#5d5f60"/>
<rect x="834.5" y="239" width="12.5" height="10.5" fill="#6f7172"/><path d="M837 247.5v-6h3.5l4 3v3z" fill="none" stroke="#c6c7c8" stroke-width=".8" stroke-dasharray="1 .8"/>
<path d="M849.5 251.5v-2.2l-2.2 2.2z" fill="#5d5f60"/>
<rect x="835" y="258" width="6" height="9" fill="#6f7172"/><path d="M841 257h7v4.5l-3.5 3l-3.5 -3z" fill="#9a9c9d"/><path d="M836.2 263a2 2 0 0 0 4 0z" fill="#111"/>
<path d="M833.5 275.5l3.2 2.2l-3.2 2.2z" fill="#8d8f90"/>
<path d="M840 288.5v-6.5l2.5 -3.5q1.5 1.5 3 0l2 3.5v6.5z" fill="none" stroke="#9a9c9d" stroke-width=".9"/>
<path d="M835 295H849" stroke="#1a1c1d" stroke-width="1.2"/>
<rect x="834.5" y="302.9" width="7.5" height="9.5" fill="#9a9c9d"/><rect x="842" y="304.4" width="5" height="6.5" fill="#6f7172"/><path d="M842 303.9v7.5" stroke="#c6c7c8" stroke-width=".7"/>
<path d="M835 319.7H849" stroke="#1a1c1d" stroke-width="1.2"/>
<path d="M833.5 327l3.2 2.2l-3.2 2.2z" fill="#8d8f90"/>
<rect x="843.5" y="327" width="4.5" height="10" fill="#6f7172"/><path d="M841 326.5v11" stroke="#c6c7c8" stroke-width="1.1"/>
<circle cx="841" cy="326.5" r="0.9" fill="#c6c7c8"/>
<circle cx="841" cy="337.5" r="0.9" fill="#c6c7c8"/>
<path d="M834.5 347.9h13" stroke="#c6c7c8" stroke-width=".9"/><rect x="835" y="350.9" width="12.5" height="4.5" fill="#9a9c9d"/>
<circle cx="834.8" cy="347.9" r="0.8" fill="#c6c7c8"/>
<circle cx="847.6" cy="347.9" r="0.8" fill="#c6c7c8"/>
<path d="M835 363.3H849" stroke="#1a1c1d" stroke-width="1.2"/>
<path d="M833.5 373l3.2 2.2l-3.2 2.2z" fill="#8d8f90"/>
<text x="837.5" y="381.5" font-family="Liberation Serif, serif" font-size="11" fill="#c6c7c8">A</text>
<text x="835.3" y="401.5" font-family="Liberation Serif, serif" font-size="14" fill="#c6c7c8">A</text>
<path d="M833.5 407.8l3.2 2.2l-3.2 2.2z" fill="#8d8f90"/>
<path d="M837 419.8l11 -10" stroke="#c6c7c8" stroke-width=".9"/><path d="M840 416.8a3.5 3.5 0 0 1 5.5 -3.2M841.8 415.3a2 2 0 0 1 2.6 -1.5" fill="none" stroke="#9a9c9d" stroke-width=".7"/>
<circle cx="837" cy="419.8" r="0.8" fill="#c6c7c8"/>
<path d="M835 426.8H849" stroke="#1a1c1d" stroke-width="1.2"/>
<path d="M835.5 434.8v10.5M839 434.8v10.5M842.5 434.8v10.5M846 434.8v10.5M835 434.8h11.5M835 445.3h11.5" stroke="#9a9c9d" stroke-width=".8" fill="none"/>
<path d="M835 454.2l3 1v9l-3 -1zM839.5 455.2l3 -1v9l-3 1zM844 454.2l3 1v9l-3 -1z" fill="#9a9c9d"/>
<path d="M835.5 478.5v5M838 478.5v5M840.5 478.5v5M843 479.5v4" stroke="#c6c7c8" stroke-width="1"/><path d="M839 475.5h6v-2l3 3l-3 3v-2h-3" fill="#9a9c9d"/>
<path d="M835 490.5H849" stroke="#1a1c1d" stroke-width="1.2"/>
<path d="M833.5 496.8l3.2 2.2l-3.2 2.2z" fill="#8d8f90"/>
<path d="M838.5 510.8v-9l5 -3.5l4 2.5v10z" fill="#9a9c9d"/><path d="M843.5 498.3l0 4l4 -1.5" fill="#6f7172"/>
<circle cx="841.5" cy="517.5" r="1.3" fill="#9a9c9d"/><path d="M839.5 519.5h4.5v4.5l-.8 4h-1l-.5 -3.5l-.5 3.5h-1l-.7 -4z" fill="#9a9c9d"/><rect x="844" y="520.5" width="3" height="3" fill="#6f7172"/>
<g transform="translate(-1.2 -.4)">
<path d="M854.5 44l3.2 2.2l-3.2 2.2z" fill="#8d8f90"/>
<path d="M861.0 46.5h5.5q2.5 0 2.5 2.5v6.5h-8.5v-2.5h5v-2h-2v1h-2.5z" fill="#9a9c9d"/>
<path d="M861.0 62.0h5.5q2.5 0 2.5 2.5v6.5h-8.5v-2.5h5v-2h-2v1h-2.5z" fill="#55585a"/>
<path d="M855 73.5h8.5" stroke="#c6c7c8" stroke-width=".8"/>
<circle cx="855" cy="73.5" r="0.8" fill="#c6c7c8"/>
<circle cx="863.5" cy="73.5" r="0.8" fill="#c6c7c8"/>
<path d="M869.5 76.5v-2.2l-2.2 2.2z" fill="#5d5f60"/>
<path d="M861.0 81.0h5.5q2.5 0 2.5 2.5v6.5h-8.5v-2.5h5v-2h-2v1h-2.5z" fill="#55585a"/>
<path d="M855 92.5q2.5 -2 4.5 0t4.5 0" fill="none" stroke="#c6c7c8" stroke-width=".8"/>
<circle cx="859.5" cy="92.5" r="0.8" fill="#c6c7c8"/>
<path d="M869.5 95.5v-2.2l-2.2 2.2z" fill="#5d5f60"/>
<circle cx="856" cy="103" r="1.3" fill="none" stroke="#6f7172" stroke-width=".6"/><path d="M857 104l1.2 1.4" stroke="#6f7172" stroke-width=".6"/>
<path d="M861.5 104.5h5.5q2.5 0 2.5 2.5v6.5h-8.5v-2.5h5v-2h-2v1h-2.5z" fill="#9a9c9d"/>
<path d="M856 119.7H870" stroke="#1a1c1d" stroke-width="1.2"/>
<path d="M857.5 135q0 -6 6 -6h4.5v2h-3v1.5q5 .5 5 4.5v1h-12.5z" fill="#6f7172"/><path d="M857.5 135.5h12.5" stroke="#9a9c9d" stroke-width=".9"/>
<path d="M856 145H870" stroke="#1a1c1d" stroke-width="1.2"/>
<path d="M854.5 151l3.2 2.2l-3.2 2.2z" fill="#8d8f90"/>
<path transform="translate(864 158) scale(1.0)" d="M-2.2 -4.5 q2.2 1.6 4.4 0 l4 1.8 l-1.6 3 l-1.8 -.8 v5.5 h-5.6 v-5.5 l-1.8 .8 l-1.6 -3z" fill="#9a9c9d"/>
<path d="M856 169.5H870" stroke="#1a1c1d" stroke-width="1.2"/>
<path d="M854.5 175.7l3.2 2.2l-3.2 2.2z" fill="#8d8f90"/>
<path d="M860 186.7v-6l3.5 -3.5v2l3.5 -2.5v10z" fill="#9a9c9d"/><path d="M861.5 184.7h1.8v1.8h-1.8zM864 181.7h1.8v1.8H864z" fill="#2a2d2f"/>
<path d="M854.5 195.6l3.2 2.2l-3.2 2.2z" fill="#8d8f90"/>
<path transform="translate(864 202.1) scale(0.88)" d="M-2.2 -4.5 q2.2 1.6 4.4 0 l4 1.8 l-1.6 3 l-1.8 -.8 v5.5 h-5.6 v-5.5 l-1.8 .8 l-1.6 -3z" fill="#9a9c9d"/>
<path d="M862 200.6h1.6v1.6H862zM864.4 203.0h1.6v1.6h-1.6zM864.4 199.6h1.3v1.3h-1.3zM862 203.79999999999998h1.4v1.4H862z" fill="#2a2d2f"/>
<path transform="translate(863.8 221.3) scale(1.15)" d="M-2.2 -4.5 q2.2 1.6 4.4 0 l4 1.8 l-1.6 3 l-1.8 -.8 v5.5 h-5.6 v-5.5 l-1.8 .8 l-1.6 -3z" fill="#9a9c9d"/>
<path d="M861.4 219.3h2v2h-2zM864.4 222.3h2v2h-2zM864.4 217.9h1.6v1.6h-1.6zM861.4 223.3h1.8v1.8h-1.8z" fill="#2a2d2f"/>
<path d="M856 232H870" stroke="#1a1c1d" stroke-width="1.2"/>
<path d="M854.5 237.7l3.2 2.2l-3.2 2.2z" fill="#8d8f90"/>
<path d="M859.5 250.7l9 -9.5" stroke="#c6c7c8" stroke-width="1.3" stroke-dasharray="1.8 .9"/>
<path d="M855.5 262.6h13.5" stroke="#c6c7c8" stroke-width="1.2" stroke-dasharray="2.2 1"/><path d="M855.5 267.1h13.5" stroke="#9a9c9d" stroke-width=".7"/><path d="M855 267.1l1.8 -1.2v2.4zM869.5 267.1l-1.8 -1.2v2.4z" fill="#9a9c9d"/>
<path d="M855 282.3q3.5 -3.5 7 0t7 0" fill="none" stroke="#c6c7c8" stroke-width="1.1" stroke-dasharray="2.2 .9"/><path d="M855 286.8q3.5 -3.5 7 0t7 0" fill="none" stroke="#9a9c9d" stroke-width=".7"/>
<path d="M860.5 296.0h5.5q2.5 0 2.5 2.5v6.5h-8.5v-2.5h5v-2h-2v1h-2.5z" fill="#55585a"/>
<path d="M855 308q3.5 -3.5 7 0t7 0" fill="none" stroke="#c6c7c8" stroke-width="1.1" stroke-dasharray="2.2 .9"/>
<path d="M856 315.6H870" stroke="#1a1c1d" stroke-width="1.2"/>
<path d="M854.5 320.8l3.2 2.2l-3.2 2.2z" fill="#8d8f90"/>
<path d="M858.5 324.8l1.2 3l1.2 -3l1.2 3l1.2 -3M858.5 328.8l1.2 3l1.2 -3l1.2 3l1.2 -3" stroke="#9a9c9d" stroke-width=".6" fill="none"/><path d="M866.5 322.8v12" stroke="#c6c7c8" stroke-width=".8"/>
<circle cx="866.5" cy="322.8" r="0.8" fill="#c6c7c8"/>
<circle cx="866.5" cy="334.8" r="0.8" fill="#c6c7c8"/>
<path d="M857.5 343.5l1.4 4.5l1.4 -4.5l1.4 4.5l1.4 -4.5l1.4 4.5l1.4 -4.5l1.4 4.5l1.2 -4.5" stroke="#c6c7c8" stroke-width=".8" fill="none"/>
<path d="M855.5 351.5h13.5" stroke="#9a9c9d" stroke-width=".7"/>
<circle cx="855.5" cy="351.5" r="0.7" fill="#c6c7c8"/>
<circle cx="869" cy="351.5" r="0.7" fill="#c6c7c8"/>
<path d="M857.5 363.2l1.4 4.5l1.4 -4.5l1.4 4.5l1.4 -4.5l1.4 4.5l1.4 -4.5l1.4 4.5l1.2 -4.5" stroke="#c6c7c8" stroke-width=".8" fill="none"/>
<path d="M855.5 371.7q3.5 -2.5 6.5 0t7 0" fill="none" stroke="#9a9c9d" stroke-width=".7"/>
<path d="M860.0 378.1h5.5q2.5 0 2.5 2.5v6.5h-8.5v-2.5h5v-2h-2v1h-2.5z" fill="#55585a"/>
<path d="M857.5 388.6l1.4 4.5l1.4 -4.5l1.4 4.5l1.4 -4.5l1.4 4.5l1.4 -4.5l1.4 4.5l1.2 -4.5" stroke="#c6c7c8" stroke-width=".8" fill="none"/>
<path d="M856 398.3H870" stroke="#1a1c1d" stroke-width="1.2"/>
<path d="M855 415.0v-6h2.5l1 -1.5h3l1 1.5h1v6z" fill="#6f7172"/><circle cx="860" cy="412.1" r="1.7" fill="#c6c7c8"/><path d="M863 415.0v-6.5l2 -2.5l1.5 1.5l1.5 -1.5l1.5 2.5v6.5z" fill="#9a9c9d"/>
<path d="M856 423.8H870" stroke="#1a1c1d" stroke-width="1.2"/>
<path d="M854.5 429.8l3.2 2.2l-3.2 2.2z" fill="#8d8f90"/>
<rect x="859.5" y="433.3" width="9" height="9" fill="none" stroke="#c6c7c8" stroke-width=".8" stroke-dasharray="1.6 .8"/><path d="M860 441.8l8 -8M860 437.8q4 0 8 3.5" stroke="#9a9c9d" stroke-width=".6" fill="none"/>
</g>
</svg>
<div id="status" class="abs"></div>
<div id="rpanel" class="abs"></div>
<div class="abs" style="left:876.3px;top:25px;width:203.7px;height:11.3px;background:#1b1e1f;"></div>
<div class="abs" style="left:883.3px;top:26.5px;width:0.8px;height:8.5px;background:#2c3032;"></div>
<span class="lb" id="lb15" style="left:952.0px;top:26.5px;font-size:7.8px;color:#d2d2d2;font-weight:normal;transform:scaleX(0.931);">Object Browser</span>
<div class="abs" style="left:876.3px;top:36.3px;width:203.7px;height:11.7px;background:#1f2224;"></div>
<div class="abs" style="left:908.5px;top:36.3px;width:29.5px;height:11.7px;background:#2d3133;"></div>
<span class="lb" id="lb16" style="left:882.8px;top:37.6px;font-size:7.8px;color:#c9c9c9;font-weight:normal;transform:scaleX(0.877);">Scene</span>
<span class="lb" id="lb17" style="left:914.6px;top:37.6px;font-size:7.8px;color:#f0f0f0;font-weight:normal;transform:scaleX(0.789);">Fabric</span>
<span class="lb" id="lb18" style="left:945.0px;top:37.6px;font-size:7.8px;color:#c9c9c9;font-weight:normal;transform:scaleX(0.976);">Button</span>
<span class="lb" id="lb19" style="left:979.8px;top:37.6px;font-size:7.8px;color:#c9c9c9;font-weight:normal;transform:scaleX(0.938);">Buttonhole</span>
<span class="lb" id="lb20" style="left:1028.5px;top:37.6px;font-size:7.8px;color:#c9c9c9;font-weight:normal;transform:scaleX(0.926);">Topstitch</span>
<div class="abs" style="left:964.6px;top:57.6px;width:34.2px;height:11.8px;background:#2f3335;border:1px solid #34383a"></div>
<div class="abs" style="left:1000.3px;top:57.6px;width:37px;height:11.8px;background:#2f3335;border:1px solid #34383a"></div>
<div class="abs" style="left:1039.2px;top:57.6px;width:41px;height:11.8px;background:#2f3335;border:1px solid #34383a"></div>
<span class="lb" id="lb21" style="left:980.3px;top:59.3px;font-size:7.8px;color:#ececec;font-weight:normal;transform:scaleX(0.937);">Add</span>
<span class="lb" id="lb22" style="left:1016.0px;top:59.3px;font-size:7.8px;color:#55595b;font-weight:normal;transform:scaleX(0.879);">Copy</span>
<span class="lb" id="lb23" style="left:1055.0px;top:59.3px;font-size:7.8px;color:#55595b;font-weight:normal;transform:scaleX(0.854);">Assign</span>
<div class="abs" style="left:883.5px;top:74.7px;width:191px;height:0.8px;background:#303436;"></div>
<div class="abs" style="left:883.5px;top:101.3px;width:191px;height:0.8px;background:#303436;"></div>
<div class="abs" style="left:883.5px;top:127.8px;width:191px;height:0.8px;background:#303436;"></div>
<div class="abs" style="left:883.5px;top:155.4px;width:191px;height:0.8px;background:#303436;"></div>
<div class="abs" style="left:903.9px;top:77.9px;width:21.8px;height:21.8px;background:#aaa6ae;box-shadow:0 0 0 .5px #8a878e"></div>
<div class="abs" style="left:903.9px;top:105px;width:21.8px;height:21.8px;background:#b1aeb7;box-shadow:0 0 0 .5px #8a878e"></div>
<div class="abs" style="left:903.9px;top:132px;width:21.8px;height:21.8px;background:#87858a;box-shadow:0 0 0 .5px #6f6d72"></div>
<span class="lb" id="lb24" style="left:931.4px;top:84.3px;font-size:8px;color:#d4d4d4;font-weight:normal;transform:scaleX(0.929);">Outer</span>
<span class="lb" id="lb25" style="left:931.4px;top:111.4px;font-size:8px;color:#e6e6e6;font-weight:normal;transform:scaleX(0.898);">Inner charmeuse</span>
<span class="lb" id="lb26" style="left:931.4px;top:138.5px;font-size:8px;color:#d4d4d4;font-weight:normal;transform:scaleX(0.872);">Lace charmeuse</span>
<div class="abs" style="left:875px;top:309.5px;width:205px;height:2.5px;background:#1f2224;"></div>
<div class="abs" style="left:876.3px;top:312.3px;width:203.7px;height:9.3px;background:#1b1e1f;"></div>
<div class="abs" style="left:883.3px;top:313.5px;width:0.8px;height:7px;background:#2c3032;"></div>
<span class="lb" id="lb27" style="left:952.0px;top:312.2px;font-size:7.8px;color:#d2d2d2;font-weight:normal;transform:scaleX(0.954);">Property Editor</span>
<svg width="1080" height="608" viewBox="0 0 1080 608"><path d="M876.5 31h3.2M878.3 29.4l1.6 1.6l-1.6 1.6" stroke="#d0d0d0" stroke-width=".9" fill="none"/><path d="M876.5 316.9h3.2M878.3 315.3l1.6 1.6l-1.6 1.6" stroke="#d0d0d0" stroke-width=".9" fill="none"/><path d="M1073.5 28.3h3.4v3.4h-3.4z M1075.5 27.2h3v3 M1073.5 314.8h3.4v3.4h-3.4z M1075.5 313.7h3v3" stroke="#8b8f91" stroke-width=".7" fill="none"/><path d="M1067.5 41l-1.6 1.3l1.6 1.3z" fill="#55595b"/><path d="M1076.5 41l1.6 1.3l-1.6 1.3z" fill="#55595b"/><path d="M969.8 63.6h4.6M972.1 61.3v4.6" stroke="#d8d8d8" stroke-width=".8"/><path d="M1006 61.5h3.6v3.6h-3.6zM1007.5 60.3h3.6v3.6" stroke="#4f5355" stroke-width=".8" fill="none"/><path d="M1044.5 62v2.5q0 1.5 1.5 1.5t1.5 -1.5V62M1049.5 61.5l1 1" stroke="#4f5355" stroke-width=".8" fill="none"/><path d="M888.3 115.2l2.6 2.9l5.6 -6.6" stroke="#35a8ea" stroke-width="2" fill="none" stroke-linecap="round" stroke-linejoin="round"/><path d="M904 140l8 -8M904 150l18 -18M910 154l15.5 -15.5M920 154l5.5 -5.5M904 134l8 8l-8 8M914 132l11 11M908 146l8 8" stroke="#75737a" stroke-width=".6" fill="none" opacity=".8"/></svg>
<div class="abs" style="left:952.6px;top:503.4px;width:125px;height:92px;background:#2b2f31;border:1px solid #25282a"></div>
<div class="abs" style="left:952.6px;top:503.4px;width:125px;height:14.3px;background:#1f2224;"></div>
<span class="lb" id="lb28" style="left:988.7px;top:505.6px;font-size:8.4px;color:#e0e0e0;font-weight:normal;transform:scaleX(0.840);">Style Line</span>
<div class="abs" style="left:958.6px;top:524.4px;width:113px;height:64px;background:#26292b;border:1px solid #303436"></div>
<span class="lb" id="lb29" style="left:965.7px;top:531.9px;font-size:8.4px;color:#dcdcdc;font-weight:normal;transform:scaleX(0.798);">Thickness</span>
<div class="abs" style="left:1000.4px;top:531.3px;width:36.4px;height:11.2px;background:#1f2224;border:1px solid #2f3335"></div>
<div class="abs" style="left:1001.2px;top:532.6px;width:4.6px;height:8px;background:#6fa0d8;"></div>
<span class="lb" id="lb30" style="left:1002.6px;top:532.4px;font-size:7.4px;color:#fff;font-weight:normal;transform:scaleX(0.533);">1</span>
<div class="abs" style="left:1037.2px;top:531.3px;width:7.4px;height:5.3px;background:#3a3e40;"></div>
<div class="abs" style="left:1037.2px;top:537.2px;width:7.4px;height:5.3px;background:#3a3e40;"></div>
<span class="lb" id="lb31" style="left:1048.8px;top:531.9px;font-size:8.4px;color:#dcdcdc;font-weight:normal;transform:scaleX(0.788);">Pixels</span>
<span class="lb" id="lb32" style="left:965.1px;top:547.9px;font-size:8.4px;color:#dcdcdc;font-weight:normal;transform:scaleX(0.789);">Color</span>
<div class="abs" style="left:999.5px;top:546.7px;width:46.1px;height:11.5px;background:#000;"></div>
<div class="abs" style="left:965.5px;top:563.2px;width:6.5px;height:6.5px;background:#7a7c7d;"></div>
<span class="lb" id="lb33" style="left:976.3px;top:561.4px;font-size:8.4px;color:#dcdcdc;font-weight:normal;transform:scaleX(0.874);">Show Silhouette</span>
<div class="abs" style="left:965.5px;top:575.4px;width:6.5px;height:6.5px;background:#dfe6ea;"></div>
<span class="lb" id="lb34" style="left:976.3px;top:573.8px;font-size:8.4px;color:#dcdcdc;font-weight:normal;transform:scaleX(0.865);">Show on Internal Lines</span>
<svg width="1080" height="608" viewBox="0 0 1080 608"><path d="M966.6 578.5l1.7 1.9l3 -3.8" stroke="#2d9ee4" stroke-width="1.3" fill="none"/><path d="M1039.3 535.2l1.6 -2l1.6 2zM1039.3 538.8l1.6 2l1.6 -2z" fill="#8a8e90"/><path d="M1059.5 508.5l3 3M1059.3 508.3h2.6M1059.3 508.3v2.6" stroke="#c8c8c8" stroke-width=".8" fill="none"/><path d="M1069.3 508.6l3.4 3.6M1072.7 508.6l-3.4 3.6" stroke="#d8d8d8" stroke-width=".9"/><rect x="1004.3" y="597.5" width="10" height="8" fill="none" stroke="#7b7f81" stroke-width=".7"/><path d="M1009.3 597.5v8" stroke="#7b7f81" stroke-width=".7"/><rect x="1022.8" y="597.5" width="9.6" height="8" fill="none" stroke="#4b4f51" stroke-width=".8"/><rect x="1041" y="597.5" width="10" height="8" fill="none" stroke="#4b4f51" stroke-width=".8"/><path d="M1072.3 600.2a3 3 0 1 0 .4 2.6" stroke="#8b8f91" stroke-width="1" fill="none"/><path d="M1070.6 600.6h2.6v-2.6z" fill="#8b8f91"/></svg>
<span class="lb" id="lb35" style="left:1024.8px;top:598.8px;font-size:4.6px;color:#4b4f51;font-weight:normal;transform:scaleX(0.970);">3D</span>
<span class="lb" id="lb36" style="left:1043.2px;top:598.8px;font-size:4.6px;color:#4b4f51;font-weight:normal;transform:scaleX(0.970);">2D</span>
<span class="lb" id="lb37" style="left:-3.5px;top:596.2px;font-size:6.6px;color:#d2d2d2;font-weight:normal;transform:scaleX(0.914);">284 (r29975)</span>
</body></html>
